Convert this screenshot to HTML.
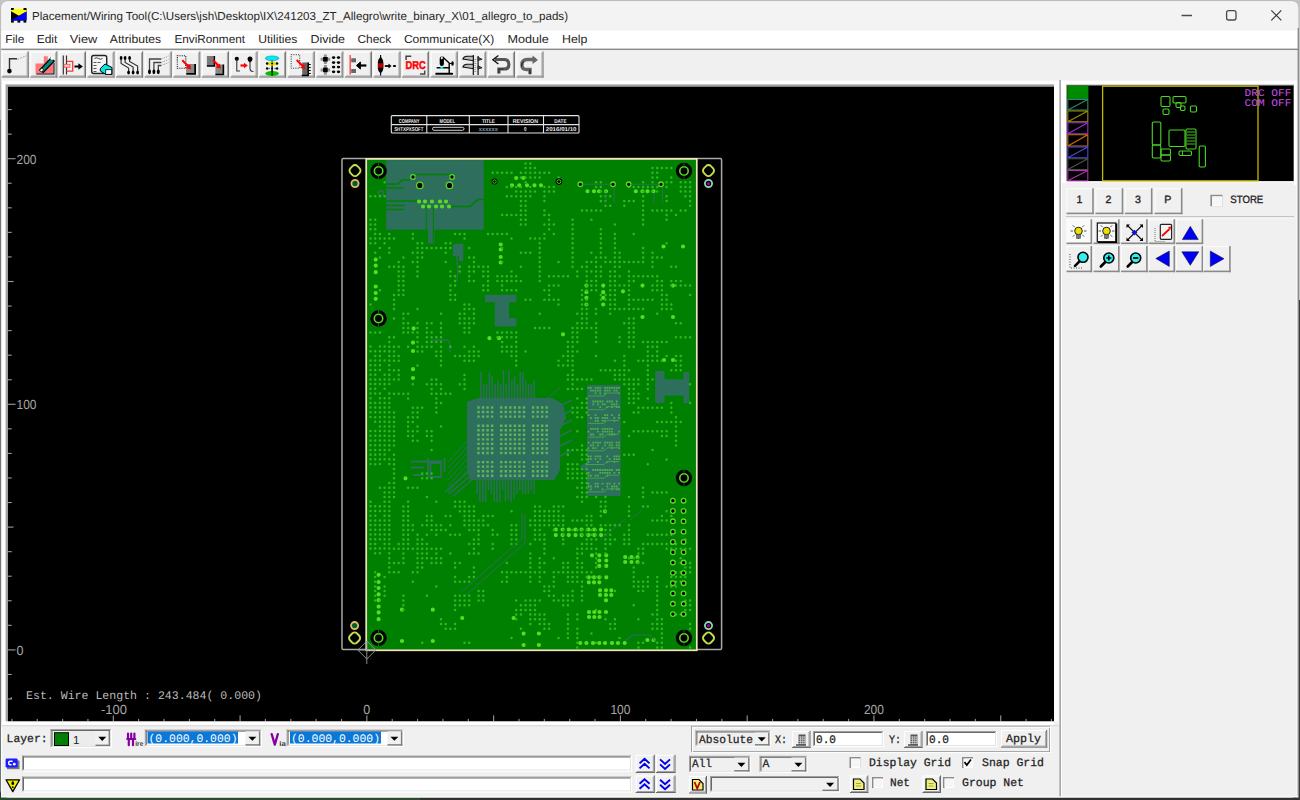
<!DOCTYPE html>
<html><head><meta charset="utf-8"><title>Placement/Wiring Tool</title><style>html,body{margin:0;padding:0;width:1300px;height:800px;overflow:hidden;background:#1f2520}svg{display:block}</style></head><body>
<svg width="1300" height="800" viewBox="0 0 1300 800" text-rendering="geometricPrecision">
<rect x="0" y="0" width="1300" height="800" fill="#c4c4c4" />
<rect x="0" y="120" width="1.5" height="680" fill="#2a3a2c" />
<rect x="0" y="797" width="1300" height="3" fill="#303230" />
<rect x="0" y="797" width="420" height="3" fill="#2d4a2e" />
<rect x="1298.5" y="300" width="1.5" height="500" fill="#3a3a3a" />
<rect x="0.5" y="0.5" width="1298" height="797" rx="7" ry="7" fill="#b4b4b4"/>
<rect x="1.2" y="1.2" width="1297" height="796" rx="6.5" ry="6.5" fill="#f0f0f0"/>
<path d="M1.2 30.5 V8 Q1.2 1.2 8 1.2 H1291.5 Q1298.2 1.2 1298.2 8 V30.5 Z" fill="#f3f3f3"/>
<rect x="11" y="9" width="15.5" height="11.5" fill="#000" />
<path d="M11 9 H26.5 V11.5 L19 15.8 L11 11.2 Z" fill="#ffff00" stroke="none" stroke-width="1" />
<path d="M11 20.6 L19 15.8 L26.5 11.5 V20.6 Z" fill="#0000ff" stroke="none" stroke-width="1" />
<path d="M11 8 h3 l-0.5 2 h-2.5z" fill="#000" stroke="none" stroke-width="1" />
<path d="M23.5 8 h3 v2 h-3z" fill="#000" stroke="none" stroke-width="1" />
<rect x="11" y="20.3" width="2.8" height="2.3" fill="#000" />
<rect x="17.5" y="20.3" width="2.8" height="2.3" fill="#000" />
<rect x="23.5" y="20.3" width="2.8" height="2.3" fill="#000" />
<text x="32" y="19.6" font-family="Liberation Sans" font-size="11.6" fill="#262626" text-anchor="start" textLength="536" lengthAdjust="spacingAndGlyphs">Placement/Wiring Tool(C:\Users\jsh\Desktop\IX\241203_ZT_Allegro\write_binary_X\01_allegro_to_pads)</text>
<line x1="1181.5" y1="15.5" x2="1192" y2="15.5" stroke="#4a4a4a" stroke-width="1.5" />
<rect x="1226.6" y="10.6" width="9.4" height="9.4" rx="2" fill="none" stroke="#4a4a4a" stroke-width="1.3"/>
<line x1="1271.3" y1="10.3" x2="1281.3" y2="20.3" stroke="#3a3a3a" stroke-width="1.2" />
<line x1="1281.3" y1="10.3" x2="1271.3" y2="20.3" stroke="#3a3a3a" stroke-width="1.2" />
<rect x="1.2" y="30.5" width="1297" height="18.3" fill="#ffffff" />
<rect x="1.2" y="48.6" width="1297" height="1.6" fill="#8a8a8a" />
<text x="5.2" y="42.6" font-family="Liberation Sans" font-size="11.6" fill="#262626" text-anchor="start" textLength="19.0" lengthAdjust="spacingAndGlyphs">File</text>
<text x="36.7" y="42.6" font-family="Liberation Sans" font-size="11.6" fill="#262626" text-anchor="start" textLength="20.6" lengthAdjust="spacingAndGlyphs">Edit</text>
<text x="69.8" y="42.6" font-family="Liberation Sans" font-size="11.6" fill="#262626" text-anchor="start" textLength="27.5" lengthAdjust="spacingAndGlyphs">View</text>
<text x="109.8" y="42.6" font-family="Liberation Sans" font-size="11.6" fill="#262626" text-anchor="start" textLength="51.4" lengthAdjust="spacingAndGlyphs">Attributes</text>
<text x="174.4" y="42.6" font-family="Liberation Sans" font-size="11.6" fill="#262626" text-anchor="start" textLength="70.6" lengthAdjust="spacingAndGlyphs">EnviRonment</text>
<text x="258.2" y="42.6" font-family="Liberation Sans" font-size="11.6" fill="#262626" text-anchor="start" textLength="39.1" lengthAdjust="spacingAndGlyphs">Utilities</text>
<text x="310.5" y="42.6" font-family="Liberation Sans" font-size="11.6" fill="#262626" text-anchor="start" textLength="34.5" lengthAdjust="spacingAndGlyphs">Divide</text>
<text x="357.5" y="42.6" font-family="Liberation Sans" font-size="11.6" fill="#262626" text-anchor="start" textLength="33.7" lengthAdjust="spacingAndGlyphs">Check</text>
<text x="403.9" y="42.6" font-family="Liberation Sans" font-size="11.6" fill="#262626" text-anchor="start" textLength="90.3" lengthAdjust="spacingAndGlyphs">Communicate(X)</text>
<text x="507.5" y="42.6" font-family="Liberation Sans" font-size="11.6" fill="#262626" text-anchor="start" textLength="41.4" lengthAdjust="spacingAndGlyphs">Module</text>
<text x="562" y="42.6" font-family="Liberation Sans" font-size="11.6" fill="#262626" text-anchor="start" textLength="25.4" lengthAdjust="spacingAndGlyphs">Help</text>
<rect x="1.2" y="50.2" width="1297" height="30.5" fill="#f0f0f0" />
<rect x="1.7" y="51.5" width="27" height="26" fill="#f0f0f0" />
<rect x="1.7" y="51.5" width="26" height="1" fill="#ffffff" />
<rect x="1.7" y="51.5" width="1" height="25" fill="#ffffff" />
<rect x="1.7" y="76.5" width="27" height="1" fill="#696969" />
<rect x="27.7" y="51.5" width="1" height="26" fill="#696969" />
<rect x="2.7" y="75.5" width="25" height="1" fill="#a0a0a0" />
<rect x="26.7" y="52.5" width="1" height="24" fill="#a0a0a0" />
<g transform="translate(1.7,51.5)"><path d="M7.8 18 V7.3 H15.3" fill="none" stroke="#333" stroke-width="1.4"/><path d="M15.5 8 L24.5 4.3" stroke="#aaa" stroke-width="1" stroke-dasharray="2 1"/><circle cx="7.7" cy="19.6" r="2.3" fill="#000"/></g>
<rect x="30.3" y="51.5" width="27" height="26" fill="#f0f0f0" />
<rect x="30.3" y="51.5" width="26" height="1" fill="#ffffff" />
<rect x="30.3" y="51.5" width="1" height="25" fill="#ffffff" />
<rect x="30.3" y="76.5" width="27" height="1" fill="#696969" />
<rect x="56.3" y="51.5" width="1" height="26" fill="#696969" />
<rect x="31.3" y="75.5" width="25" height="1" fill="#a0a0a0" />
<rect x="55.3" y="52.5" width="1" height="24" fill="#a0a0a0" />
<g transform="translate(30.3,51.5)"><path d="M5.2 12 H13.5 V4.7 H17.5 V12 H23.2 V22 H5.2 Z" fill="#f77" /><path d="M6 22 H23.2 V11 H24.2 V23 H6 Z" fill="#000"/><path d="M9.5 18.5 L20.5 6.5 L24 9.5 L13 21 Z" fill="#008a80" stroke="#000" stroke-width="1.2"/><path d="M9.2 18.8 L11.5 16.5 L13.5 18.5 L11 20.5 Z" fill="#fff" stroke="#000" stroke-width="0.8"/><circle cx="21.8" cy="6.8" r="1.6" fill="#fff"/></g>
<rect x="58.9" y="51.5" width="27" height="26" fill="#f0f0f0" />
<rect x="58.9" y="51.5" width="26" height="1" fill="#ffffff" />
<rect x="58.9" y="51.5" width="1" height="25" fill="#ffffff" />
<rect x="58.9" y="76.5" width="27" height="1" fill="#696969" />
<rect x="84.9" y="51.5" width="1" height="26" fill="#696969" />
<rect x="59.9" y="75.5" width="25" height="1" fill="#a0a0a0" />
<rect x="83.9" y="52.5" width="1" height="24" fill="#a0a0a0" />
<g transform="translate(58.9,51.5)"><path d="M4.4 4 V23 M7.6 4 V23" stroke="#333" stroke-width="1.2"/><path d="M7.6 9.8 H13.8 V19.6 H7.6" fill="none" stroke="#f33" stroke-width="1.3"/><rect x="5.2" y="12.8" width="5.8" height="3" fill="#fcc" stroke="#f55" stroke-width="0.8"/><path d="M15.5 15 H20" stroke="#000" stroke-width="2"/><path d="M19.5 11.8 L24 15 L19.5 18.2 Z" fill="#000"/></g>
<rect x="87.5" y="51.5" width="27" height="26" fill="#f0f0f0" />
<rect x="87.5" y="51.5" width="26" height="1" fill="#ffffff" />
<rect x="87.5" y="51.5" width="1" height="25" fill="#ffffff" />
<rect x="87.5" y="76.5" width="27" height="1" fill="#696969" />
<rect x="113.5" y="51.5" width="1" height="26" fill="#696969" />
<rect x="88.5" y="75.5" width="25" height="1" fill="#a0a0a0" />
<rect x="112.5" y="52.5" width="1" height="24" fill="#a0a0a0" />
<g transform="translate(87.5,51.5)"><rect x="4.2" y="4" width="15" height="18" rx="2" fill="#f4f4f4" stroke="#222" stroke-width="1.4"/><path d="M7 7 q2 -1.5 4 0 t4 0" fill="none" stroke="#333" stroke-width="0.9"/><path d="M6 11 h3 M6 14 h3 M6 17 h3 M6 20 h3 M10 11 h3" stroke="#444" stroke-width="0.9"/><path d="M12.8 17 L17.5 12.5 L24.5 16 L24.5 23 L18.5 23 L12.8 19.5 Z" fill="#00e8e8" stroke="#000" stroke-width="1"/><rect x="18.2" y="18.2" width="6" height="4.6" fill="#fff" stroke="#000" stroke-width="0.8"/></g>
<rect x="116.1" y="51.5" width="27" height="26" fill="#f0f0f0" />
<rect x="116.1" y="51.5" width="26" height="1" fill="#ffffff" />
<rect x="116.1" y="51.5" width="1" height="25" fill="#ffffff" />
<rect x="116.1" y="76.5" width="27" height="1" fill="#696969" />
<rect x="142.1" y="51.5" width="1" height="26" fill="#696969" />
<rect x="117.1" y="75.5" width="25" height="1" fill="#a0a0a0" />
<rect x="141.1" y="52.5" width="1" height="24" fill="#a0a0a0" />
<g transform="translate(116.1,51.5)"><path d="M5 8 V12 L12.5 16.5 V20 M9 8 V11 L17 15.5 V20 M13.5 8 V10 L21.5 14.5 V20" fill="none" stroke="#333" stroke-width="1.2"/><ellipse cx="5" cy="6.5" rx="1.4" ry="2" fill="#000"/><ellipse cx="9" cy="6.5" rx="1.4" ry="2" fill="#000"/><ellipse cx="13.5" cy="6.5" rx="1.4" ry="2" fill="#000"/><ellipse cx="12.5" cy="21" rx="1.4" ry="2" fill="#000"/><ellipse cx="17" cy="21" rx="1.4" ry="2" fill="#000"/><ellipse cx="21.5" cy="21" rx="1.4" ry="2" fill="#000"/></g>
<rect x="144.7" y="51.5" width="27" height="26" fill="#f0f0f0" />
<rect x="144.7" y="51.5" width="26" height="1" fill="#ffffff" />
<rect x="144.7" y="51.5" width="1" height="25" fill="#ffffff" />
<rect x="144.7" y="76.5" width="27" height="1" fill="#696969" />
<rect x="170.7" y="51.5" width="1" height="26" fill="#696969" />
<rect x="145.7" y="75.5" width="25" height="1" fill="#a0a0a0" />
<rect x="169.7" y="52.5" width="1" height="24" fill="#a0a0a0" />
<g transform="translate(144.7,51.5)"><path d="M4.8 19 V7.5 H16.5 M9.2 19 V11 H16.5 M13.6 19 V14 H16.5" fill="none" stroke="#444" stroke-width="1.3"/><path d="M16.5 7.5 L24 4.5 M16.5 11 L24 8 M16.5 14 L24 11" stroke="#999" stroke-width="0.9" stroke-dasharray="1.5 1"/><ellipse cx="4.8" cy="20.3" rx="1.5" ry="2.4" fill="#000"/><ellipse cx="9.2" cy="20.3" rx="1.5" ry="2.4" fill="#000"/><ellipse cx="13.6" cy="20.3" rx="1.5" ry="2.4" fill="#000"/></g>
<rect x="173.3" y="51.5" width="27" height="26" fill="#f0f0f0" />
<rect x="173.3" y="51.5" width="26" height="1" fill="#ffffff" />
<rect x="173.3" y="51.5" width="1" height="25" fill="#ffffff" />
<rect x="173.3" y="76.5" width="27" height="1" fill="#696969" />
<rect x="199.3" y="51.5" width="1" height="26" fill="#696969" />
<rect x="174.3" y="75.5" width="25" height="1" fill="#a0a0a0" />
<rect x="198.3" y="52.5" width="1" height="24" fill="#a0a0a0" />
<g transform="translate(173.3,51.5)"><rect x="4" y="4.3" width="8.5" height="12.5" fill="none" stroke="#222" stroke-width="1.1" stroke-dasharray="1.1 1.1"/><rect x="12.8" y="12.5" width="8.5" height="9.5" rx="1" fill="#8a8a8a" /><path d="M13 22.3 H21.8 V12.5" fill="none" stroke="#000" stroke-width="1.8"/><path d="M9 8.8 L15.5 15.3" stroke="#f00" stroke-width="2"/><path d="M12.5 16.8 L17.8 17.8 L16.8 12.5 Z" fill="#f00"/></g>
<rect x="201.9" y="51.5" width="27" height="26" fill="#f0f0f0" />
<rect x="201.9" y="51.5" width="26" height="1" fill="#ffffff" />
<rect x="201.9" y="51.5" width="1" height="25" fill="#ffffff" />
<rect x="201.9" y="76.5" width="27" height="1" fill="#696969" />
<rect x="227.9" y="51.5" width="1" height="26" fill="#696969" />
<rect x="202.9" y="75.5" width="25" height="1" fill="#a0a0a0" />
<rect x="226.9" y="52.5" width="1" height="24" fill="#a0a0a0" />
<g transform="translate(201.9,51.5)"><rect x="5" y="4.5" width="7.5" height="10" fill="#7a7a7a"/><path d="M5 14.5 H12.5 V4.5" fill="none" stroke="#000" stroke-width="1.4"/><rect x="13.5" y="13" width="8" height="10" fill="#888" /><path d="M13.5 23 H21.5 V13" fill="none" stroke="#000" stroke-width="1.6"/><path d="M11 8.5 L17 14.5" stroke="#f00" stroke-width="2"/><path d="M14 16 L19 17 L18 12 Z" fill="#f00"/></g>
<rect x="230.5" y="51.5" width="27" height="26" fill="#f0f0f0" />
<rect x="230.5" y="51.5" width="26" height="1" fill="#ffffff" />
<rect x="230.5" y="51.5" width="1" height="25" fill="#ffffff" />
<rect x="230.5" y="76.5" width="27" height="1" fill="#696969" />
<rect x="256.5" y="51.5" width="1" height="26" fill="#696969" />
<rect x="231.5" y="75.5" width="25" height="1" fill="#a0a0a0" />
<rect x="255.5" y="52.5" width="1" height="24" fill="#a0a0a0" />
<g transform="translate(230.5,51.5)"><circle cx="6.3" cy="7.3" r="2.1" fill="#000"/><path d="M6.3 8 V19.5 H9.5" fill="none" stroke="#333" stroke-width="1.1"/><path d="M19.5 5 q2.5 0 2.5 2.5 q0 2 -2.5 3.5 q-2.5 -1.5 -2.5 -3.5 q0 -2.5 2.5 -2.5z" fill="#000"/><path d="M19.5 10 V17 q0 3 3.5 3" fill="none" stroke="#333" stroke-width="1.1"/><path d="M10 14 H14" stroke="#f00" stroke-width="2.2"/><path d="M13.5 11.3 L17.3 14 L13.5 16.7 Z" fill="#f00"/></g>
<rect x="259.1" y="51.5" width="27" height="26" fill="#f0f0f0" />
<rect x="259.1" y="51.5" width="26" height="1" fill="#ffffff" />
<rect x="259.1" y="51.5" width="1" height="25" fill="#ffffff" />
<rect x="259.1" y="76.5" width="27" height="1" fill="#696969" />
<rect x="285.1" y="51.5" width="1" height="26" fill="#696969" />
<rect x="260.1" y="75.5" width="25" height="1" fill="#a0a0a0" />
<rect x="284.1" y="52.5" width="1" height="24" fill="#a0a0a0" />
<g transform="translate(259.1,51.5)"><path d="M13 7 V23" stroke="#000" stroke-width="1.3"/><ellipse cx="13" cy="6.8" rx="6.8" ry="2.4" fill="#00e8ff" stroke="#088" stroke-width="0.5"/><ellipse cx="13" cy="12" rx="5" ry="2" fill="#e8e000"/><circle cx="8" cy="12" r="1.2" fill="#000"/><circle cx="18" cy="12" r="1.2" fill="#000"/><circle cx="13" cy="12" r="1" fill="#000"/><circle cx="8" cy="17" r="1.2" fill="#000"/><circle cx="18" cy="17" r="1.2" fill="#000"/><circle cx="13" cy="17" r="1.1" fill="#000"/><circle cx="10" cy="17" r="0.8" fill="#444"/><circle cx="16" cy="17" r="0.8" fill="#444"/><ellipse cx="13" cy="22" rx="6.8" ry="2.4" fill="#00c000"/><path d="M13 19 V24" stroke="#000" stroke-width="1.3"/></g>
<rect x="287.7" y="51.5" width="27" height="26" fill="#f0f0f0" />
<rect x="287.7" y="51.5" width="26" height="1" fill="#ffffff" />
<rect x="287.7" y="51.5" width="1" height="25" fill="#ffffff" />
<rect x="287.7" y="76.5" width="27" height="1" fill="#696969" />
<rect x="313.7" y="51.5" width="1" height="26" fill="#696969" />
<rect x="288.7" y="75.5" width="25" height="1" fill="#a0a0a0" />
<rect x="312.7" y="52.5" width="1" height="24" fill="#a0a0a0" />
<g transform="translate(287.7,51.5)"><rect x="3.5" y="3.2" width="8.5" height="13.5" fill="none" stroke="#333" stroke-width="1" stroke-dasharray="1 1.3"/><rect x="14.5" y="11" width="6" height="13" fill="#666"/><path d="M20.5 11 V24 H14" fill="none" stroke="#000" stroke-width="1.5"/><path d="M20.5 13 h2.5 M20.5 16 h2.5 M20.5 19 h2.5 M20.5 22 h2.5" stroke="#000" stroke-width="1"/><path d="M9 8.5 L15.5 15" stroke="#f00" stroke-width="2"/><path d="M12.5 16.5 L17.5 17.5 L16.5 12.5 Z" fill="#f00"/></g>
<rect x="316.3" y="51.5" width="27" height="26" fill="#f0f0f0" />
<rect x="316.3" y="51.5" width="26" height="1" fill="#ffffff" />
<rect x="316.3" y="51.5" width="1" height="25" fill="#ffffff" />
<rect x="316.3" y="76.5" width="27" height="1" fill="#696969" />
<rect x="342.3" y="51.5" width="1" height="26" fill="#696969" />
<rect x="317.3" y="75.5" width="25" height="1" fill="#a0a0a0" />
<rect x="341.3" y="52.5" width="1" height="24" fill="#a0a0a0" />
<g transform="translate(316.3,51.5)"><path d="M4.3 7.8 H13.9 M9.1 3 V12.6 M4.3 18.4 H13.9 M9.1 13.6 V23.2" stroke="#777" stroke-width="3" opacity="0.75"/><rect x="6.8" y="5.5" width="4.6" height="4.6" fill="#000"/><rect x="6.8" y="16.1" width="4.6" height="4.6" fill="#000"/><ellipse cx="17.3" cy="6.05" rx="1.7" ry="1.35" fill="#000"/><ellipse cx="17.3" cy="11.1" rx="1.7" ry="1.35" fill="#000"/><ellipse cx="17.3" cy="15.6" rx="1.7" ry="1.35" fill="#000"/><ellipse cx="17.3" cy="20.3" rx="1.7" ry="1.35" fill="#000"/><ellipse cx="22.2" cy="6.05" rx="1.7" ry="1.35" fill="#000"/><ellipse cx="22.2" cy="11.1" rx="1.7" ry="1.35" fill="#000"/><ellipse cx="22.2" cy="15.6" rx="1.7" ry="1.35" fill="#000"/><ellipse cx="22.2" cy="20.3" rx="1.7" ry="1.35" fill="#000"/></g>
<rect x="344.9" y="51.5" width="27" height="26" fill="#f0f0f0" />
<rect x="344.9" y="51.5" width="26" height="1" fill="#ffffff" />
<rect x="344.9" y="51.5" width="1" height="25" fill="#ffffff" />
<rect x="344.9" y="76.5" width="27" height="1" fill="#696969" />
<rect x="370.9" y="51.5" width="1" height="26" fill="#696969" />
<rect x="345.9" y="75.5" width="25" height="1" fill="#a0a0a0" />
<rect x="369.9" y="52.5" width="1" height="24" fill="#a0a0a0" />
<g transform="translate(344.9,51.5)"><path d="M5.3 3.5 V23" stroke="#f44" stroke-width="1.4"/><rect x="6.3" y="6.8" width="4.8" height="4" fill="#666"/><rect x="6.3" y="17.5" width="4.8" height="4" fill="#666"/><path d="M13.5 14 H21.5" stroke="#000" stroke-width="2.2"/><path d="M15.5 10.5 L11.5 14 L15.5 17.5 Z" fill="#000" stroke="#000" stroke-width="1"/></g>
<rect x="373.5" y="51.5" width="27" height="26" fill="#f0f0f0" />
<rect x="373.5" y="51.5" width="26" height="1" fill="#ffffff" />
<rect x="373.5" y="51.5" width="1" height="25" fill="#ffffff" />
<rect x="373.5" y="76.5" width="27" height="1" fill="#696969" />
<rect x="399.5" y="51.5" width="1" height="26" fill="#696969" />
<rect x="374.5" y="75.5" width="25" height="1" fill="#a0a0a0" />
<rect x="398.5" y="52.5" width="1" height="24" fill="#a0a0a0" />
<g transform="translate(373.5,51.5)"><path d="M7.1 3.5 V24" stroke="#000" stroke-width="1.1"/><path d="M7.1 5 Q9.8 8 9.8 11 V17 Q9.8 20 7.1 22 Q4.4 20 4.4 17 V11 Q4.4 8 7.1 5 Z" fill="#000"/><rect x="4.4" y="11.7" width="5.4" height="4.6" fill="#b00000"/><path d="M11.3 14.5 H15.5" stroke="#000" stroke-width="1.8"/><path d="M15 12 L18 14.5 L15 17 Z" fill="#000"/><rect x="19.6" y="13.4" width="2.8" height="2.2" rx="0.6" fill="#000"/></g>
<rect x="402.1" y="51.5" width="27" height="26" fill="#f0f0f0" />
<rect x="402.1" y="51.5" width="26" height="1" fill="#ffffff" />
<rect x="402.1" y="51.5" width="1" height="25" fill="#ffffff" />
<rect x="402.1" y="76.5" width="27" height="1" fill="#696969" />
<rect x="428.1" y="51.5" width="1" height="26" fill="#696969" />
<rect x="403.1" y="75.5" width="25" height="1" fill="#a0a0a0" />
<rect x="427.1" y="52.5" width="1" height="24" fill="#a0a0a0" />
<g transform="translate(402.1,51.5)"><path d="M4 8.5 V4.8 H9.2" fill="none" stroke="#444" stroke-width="1.5"/><path d="M22.6 19 V22.4 H17.8" fill="none" stroke="#444" stroke-width="1.5"/><text x="3.4" y="17.4" font-family="Liberation Sans" font-weight="bold" font-size="11.4" fill="#f00" stroke="#f00" stroke-width="0.45" textLength="20.2" lengthAdjust="spacingAndGlyphs">DRC</text></g>
<rect x="430.7" y="51.5" width="27" height="26" fill="#f0f0f0" />
<rect x="430.7" y="51.5" width="26" height="1" fill="#ffffff" />
<rect x="430.7" y="51.5" width="1" height="25" fill="#ffffff" />
<rect x="430.7" y="76.5" width="27" height="1" fill="#696969" />
<rect x="456.7" y="51.5" width="1" height="26" fill="#696969" />
<rect x="431.7" y="75.5" width="25" height="1" fill="#a0a0a0" />
<rect x="455.7" y="52.5" width="1" height="24" fill="#a0a0a0" />
<g transform="translate(430.7,51.5)"><path d="M5.5 22.2 H21.5" stroke="#000" stroke-width="2" stroke-linecap="round"/><path d="M6.5 16.3 H18" stroke="#000" stroke-width="1.5" stroke-linecap="round"/><rect x="9.6" y="15.2" width="3" height="2.2" fill="#0ee"/><path d="M12 5.5 L18.5 11.5 V22" fill="none" stroke="#000" stroke-width="1.4"/><rect x="9" y="5" width="4.2" height="9.5" rx="2" fill="#000"/><circle cx="11.1" cy="6.6" r="1.1" fill="#fff"/><ellipse cx="21.8" cy="12" rx="1.3" ry="2.3" fill="#000"/><path d="M18.5 12 H21" stroke="#000" stroke-width="1"/></g>
<rect x="459.3" y="51.5" width="27" height="26" fill="#f0f0f0" />
<rect x="459.3" y="51.5" width="26" height="1" fill="#ffffff" />
<rect x="459.3" y="51.5" width="1" height="25" fill="#ffffff" />
<rect x="459.3" y="76.5" width="27" height="1" fill="#696969" />
<rect x="485.3" y="51.5" width="1" height="26" fill="#696969" />
<rect x="460.3" y="75.5" width="25" height="1" fill="#a0a0a0" />
<rect x="484.3" y="52.5" width="1" height="24" fill="#a0a0a0" />
<g transform="translate(459.3,51.5)"><rect x="14" y="3.8" width="4.8" height="19.6" fill="#e8e8e8"/><path d="M14 3.5 V23.5 M18.8 4.5 V23.5" stroke="#111" stroke-width="1.2"/><path d="M15 8 h2 M15 10 h1.5 M15 12 h2 M15 14 h1.5 M15 16 h2 M15 18 h1.5 M15 20 h2" stroke="#777" stroke-width="0.7"/><path d="M14 4.8 H7.5 Q4.2 5.2 3.6 7.6 L14 9.2 Z" fill="#bbb" stroke="#111" stroke-width="1.1"/><path d="M14 12.8 H7.5 Q4.2 13.2 3.6 15.6 L14 17.2 Z" fill="#bbb" stroke="#111" stroke-width="1.1"/><path d="M18.8 5.8 L22.8 7.8 L18.8 9 Z M18.8 14.3 L22.8 16.3 L18.8 17.5 Z" fill="#555" stroke="#111" stroke-width="0.8"/></g>
<rect x="487.9" y="51.5" width="27" height="26" fill="#f0f0f0" />
<rect x="487.9" y="51.5" width="26" height="1" fill="#ffffff" />
<rect x="487.9" y="51.5" width="1" height="25" fill="#ffffff" />
<rect x="487.9" y="76.5" width="27" height="1" fill="#696969" />
<rect x="513.9" y="51.5" width="1" height="26" fill="#696969" />
<rect x="488.9" y="75.5" width="25" height="1" fill="#a0a0a0" />
<rect x="512.9" y="52.5" width="1" height="24" fill="#a0a0a0" />
<g transform="translate(487.9,51.5)"><path d="M7 8 H16 Q21 8 21 13 Q21 17.5 16 17.5 H11 V22" fill="none" stroke="#555" stroke-width="3.2"/><path d="M10.5 4 L5 8.2 L10.5 12.5" fill="none" stroke="#111" stroke-width="1.4"/><path d="M11 22 V17.5 H16" fill="none" stroke="#222" stroke-width="0.8"/></g>
<rect x="516.5" y="51.5" width="27" height="26" fill="#f0f0f0" />
<rect x="516.5" y="51.5" width="26" height="1" fill="#ffffff" />
<rect x="516.5" y="51.5" width="1" height="25" fill="#ffffff" />
<rect x="516.5" y="76.5" width="27" height="1" fill="#696969" />
<rect x="542.5" y="51.5" width="1" height="26" fill="#696969" />
<rect x="517.5" y="75.5" width="25" height="1" fill="#a0a0a0" />
<rect x="541.5" y="52.5" width="1" height="24" fill="#a0a0a0" />
<g transform="translate(516.5,51.5)"><path d="M19 8 H11 Q5.5 8 5.5 13 V14 Q5.5 18 10 18 H13.5 V22.5" fill="none" stroke="#666" stroke-width="3.4"/><path d="M16 4 L21.5 8.5 L16 12.5 Z" fill="#666"/><path d="M7 10 Q5 12 5 15" fill="none" stroke="#111" stroke-width="0.9"/><path d="M13.5 18 V23" stroke="#111" stroke-width="1"/></g>
<rect x="2" y="80.7" width="1056.5" height="646.3" fill="#ffffff" />
<rect x="5.6" y="84.4" width="1048.4" height="637.2" fill="#a0a0a0" />
<rect x="8" y="86.8" width="1046" height="634.8" fill="#000000" />
<rect x="1058.6" y="80.7" width="7.4" height="104.3" fill="#ffffff" />
<rect x="1058.6" y="80.7" width="0.9" height="716.5" fill="#ffffff" />
<rect x="1059.3" y="80" width="1.7" height="717.2" fill="#a9a9a9" />
<rect x="8" y="698.47" width="3.7" height="1.1" fill="#9a9a9a" />
<rect x="8" y="673.91" width="3.7" height="1.1" fill="#9a9a9a" />
<rect x="8" y="649.35" width="7.5" height="1.1" fill="#9a9a9a" />
<rect x="8" y="624.79" width="3.7" height="1.1" fill="#9a9a9a" />
<rect x="8" y="600.23" width="3.7" height="1.1" fill="#9a9a9a" />
<rect x="8" y="575.67" width="3.7" height="1.1" fill="#9a9a9a" />
<rect x="8" y="551.11" width="3.7" height="1.1" fill="#9a9a9a" />
<rect x="8" y="526.55" width="5.5" height="1.1" fill="#9a9a9a" />
<rect x="8" y="501.99" width="3.7" height="1.1" fill="#9a9a9a" />
<rect x="8" y="477.43" width="3.7" height="1.1" fill="#9a9a9a" />
<rect x="8" y="452.87" width="3.7" height="1.1" fill="#9a9a9a" />
<rect x="8" y="428.31" width="3.7" height="1.1" fill="#9a9a9a" />
<rect x="8" y="403.75" width="7.5" height="1.1" fill="#9a9a9a" />
<rect x="8" y="379.19" width="3.7" height="1.1" fill="#9a9a9a" />
<rect x="8" y="354.63" width="3.7" height="1.1" fill="#9a9a9a" />
<rect x="8" y="330.07" width="3.7" height="1.1" fill="#9a9a9a" />
<rect x="8" y="305.51" width="3.7" height="1.1" fill="#9a9a9a" />
<rect x="8" y="280.95" width="5.5" height="1.1" fill="#9a9a9a" />
<rect x="8" y="256.39" width="3.7" height="1.1" fill="#9a9a9a" />
<rect x="8" y="231.83" width="3.7" height="1.1" fill="#9a9a9a" />
<rect x="8" y="207.27" width="3.7" height="1.1" fill="#9a9a9a" />
<rect x="8" y="182.71" width="3.7" height="1.1" fill="#9a9a9a" />
<rect x="8" y="158.15" width="7.5" height="1.1" fill="#9a9a9a" />
<rect x="8" y="133.59" width="3.7" height="1.1" fill="#9a9a9a" />
<rect x="8" y="109.03" width="3.7" height="1.1" fill="#9a9a9a" />
<text x="16.5" y="163.7" font-family="Liberation Sans" font-size="13.2" fill="#a6a6a6" text-anchor="start" textLength="20" lengthAdjust="spacingAndGlyphs">200</text>
<text x="16.5" y="409.3" font-family="Liberation Sans" font-size="13.2" fill="#a6a6a6" text-anchor="start" textLength="20" lengthAdjust="spacingAndGlyphs">100</text>
<text x="16.5" y="654.9" font-family="Liberation Sans" font-size="13.2" fill="#a6a6a6" text-anchor="start" textLength="7" lengthAdjust="spacingAndGlyphs">0</text>
<rect x="11.33" y="718.9" width="1.1" height="2.5" fill="#9a9a9a" />
<rect x="36.69" y="718.9" width="1.1" height="2.5" fill="#9a9a9a" />
<rect x="62.04" y="718.9" width="1.1" height="2.5" fill="#9a9a9a" />
<rect x="87.4" y="718.9" width="1.1" height="2.5" fill="#9a9a9a" />
<rect x="112.75" y="715.4" width="1.1" height="6" fill="#9a9a9a" />
<rect x="138.11" y="718.9" width="1.1" height="2.5" fill="#9a9a9a" />
<rect x="163.46" y="718.9" width="1.1" height="2.5" fill="#9a9a9a" />
<rect x="188.82" y="718.9" width="1.1" height="2.5" fill="#9a9a9a" />
<rect x="214.17" y="718.9" width="1.1" height="2.5" fill="#9a9a9a" />
<rect x="239.53" y="715.4" width="1.1" height="6" fill="#9a9a9a" />
<rect x="264.88" y="718.9" width="1.1" height="2.5" fill="#9a9a9a" />
<rect x="290.24" y="718.9" width="1.1" height="2.5" fill="#9a9a9a" />
<rect x="315.59" y="718.9" width="1.1" height="2.5" fill="#9a9a9a" />
<rect x="340.94" y="718.9" width="1.1" height="2.5" fill="#9a9a9a" />
<rect x="366.3" y="715.4" width="1.1" height="6" fill="#9a9a9a" />
<rect x="391.66" y="718.9" width="1.1" height="2.5" fill="#9a9a9a" />
<rect x="417.01" y="718.9" width="1.1" height="2.5" fill="#9a9a9a" />
<rect x="442.37" y="718.9" width="1.1" height="2.5" fill="#9a9a9a" />
<rect x="467.72" y="718.9" width="1.1" height="2.5" fill="#9a9a9a" />
<rect x="493.07" y="715.4" width="1.1" height="6" fill="#9a9a9a" />
<rect x="518.43" y="718.9" width="1.1" height="2.5" fill="#9a9a9a" />
<rect x="543.79" y="718.9" width="1.1" height="2.5" fill="#9a9a9a" />
<rect x="569.14" y="718.9" width="1.1" height="2.5" fill="#9a9a9a" />
<rect x="594.5" y="718.9" width="1.1" height="2.5" fill="#9a9a9a" />
<rect x="619.85" y="715.4" width="1.1" height="6" fill="#9a9a9a" />
<rect x="645.21" y="718.9" width="1.1" height="2.5" fill="#9a9a9a" />
<rect x="670.56" y="718.9" width="1.1" height="2.5" fill="#9a9a9a" />
<rect x="695.92" y="718.9" width="1.1" height="2.5" fill="#9a9a9a" />
<rect x="721.27" y="718.9" width="1.1" height="2.5" fill="#9a9a9a" />
<rect x="746.62" y="715.4" width="1.1" height="6" fill="#9a9a9a" />
<rect x="771.98" y="718.9" width="1.1" height="2.5" fill="#9a9a9a" />
<rect x="797.34" y="718.9" width="1.1" height="2.5" fill="#9a9a9a" />
<rect x="822.69" y="718.9" width="1.1" height="2.5" fill="#9a9a9a" />
<rect x="848.05" y="718.9" width="1.1" height="2.5" fill="#9a9a9a" />
<rect x="873.4" y="715.4" width="1.1" height="6" fill="#9a9a9a" />
<rect x="898.75" y="718.9" width="1.1" height="2.5" fill="#9a9a9a" />
<rect x="924.11" y="718.9" width="1.1" height="2.5" fill="#9a9a9a" />
<rect x="949.47" y="718.9" width="1.1" height="2.5" fill="#9a9a9a" />
<rect x="974.82" y="718.9" width="1.1" height="2.5" fill="#9a9a9a" />
<rect x="1000.18" y="715.4" width="1.1" height="6" fill="#9a9a9a" />
<rect x="1025.53" y="718.9" width="1.1" height="2.5" fill="#9a9a9a" />
<rect x="1050.88" y="718.9" width="1.1" height="2.5" fill="#9a9a9a" />
<text x="101" y="714.2" font-family="Liberation Sans" font-size="13.2" fill="#a6a6a6" text-anchor="start" textLength="26" lengthAdjust="spacingAndGlyphs">-100</text>
<text x="363.35" y="714.2" font-family="Liberation Sans" font-size="13.2" fill="#a6a6a6" text-anchor="start" textLength="7" lengthAdjust="spacingAndGlyphs">0</text>
<text x="610.4" y="714.2" font-family="Liberation Sans" font-size="13.2" fill="#a6a6a6" text-anchor="start" textLength="20" lengthAdjust="spacingAndGlyphs">100</text>
<text x="863.95" y="714.2" font-family="Liberation Sans" font-size="13.2" fill="#a6a6a6" text-anchor="start" textLength="20" lengthAdjust="spacingAndGlyphs">200</text>
<text x="26" y="699.2" font-family="Liberation Mono" font-size="11.6" fill="#bababa" text-anchor="start" textLength="236" lengthAdjust="spacingAndGlyphs">Est. Wire Length : 243.484( 0.000)</text>
<rect x="10.5" y="697.5" width="1.5" height="1.5" fill="#aaa" />
<g fill="none" stroke="#e4e4e4" stroke-width="1.1">
<rect x="391.3" y="115.6" width="187.7" height="17.4" rx="1"/>
<path d="M391.3 124.6 H579 M426.8 115.6 V133 M469.3 115.6 V133 M508 115.6 V133 M543.5 115.6 V133"/>
<rect x="432.5" y="127.3" width="31.5" height="3" rx="1.5" stroke-width="0.9"/>
</g>
<text x="398.8" y="122.6" font-family="Liberation Sans" font-size="5.6" fill="#ededed" text-anchor="start" font-weight="bold" textLength="20.8" lengthAdjust="spacingAndGlyphs">COMPANY</text>
<text x="439.6" y="122.6" font-family="Liberation Sans" font-size="5.6" fill="#ededed" text-anchor="start" font-weight="bold" textLength="15.4" lengthAdjust="spacingAndGlyphs">MODEL</text>
<text x="481.9" y="122.6" font-family="Liberation Sans" font-size="5.6" fill="#ededed" text-anchor="start" font-weight="bold" textLength="13.1" lengthAdjust="spacingAndGlyphs">TITLE</text>
<text x="512.7" y="122.6" font-family="Liberation Sans" font-size="5.6" fill="#ededed" text-anchor="start" font-weight="bold" textLength="25.3" lengthAdjust="spacingAndGlyphs">REVISION</text>
<text x="554.2" y="122.6" font-family="Liberation Sans" font-size="5.6" fill="#ededed" text-anchor="start" font-weight="bold" textLength="12.3" lengthAdjust="spacingAndGlyphs">DATE</text>
<text x="394.2" y="131.2" font-family="Liberation Sans" font-size="5.6" fill="#ededed" text-anchor="start" font-weight="bold" textLength="29.3" lengthAdjust="spacingAndGlyphs">SHTXPXSOFT</text>
<text x="524" y="131.2" font-family="Liberation Sans" font-size="5.6" fill="#ededed" text-anchor="start" font-weight="bold" textLength="2.5" lengthAdjust="spacingAndGlyphs">0</text>
<text x="545.8" y="131.2" font-family="Liberation Sans" font-size="5.6" fill="#ededed" text-anchor="start" font-weight="bold" textLength="30.7" lengthAdjust="spacingAndGlyphs">2016/01/10</text>
<text x="478.8" y="131.2" font-family="Liberation Sans" font-size="5.6" fill="#7a9aa8" text-anchor="start" font-weight="bold" textLength="19" lengthAdjust="spacingAndGlyphs">xxxxxx</text>
<rect x="342" y="158.5" width="379.6" height="491" rx="1.2" fill="none" stroke="#a8a8a8" stroke-width="1.5"/>
<rect x="366.2" y="158.9" width="330.59999999999997" height="491.4" fill="#008000" stroke="#f6e2bd" stroke-width="1.7"/>
<rect x="386.2" y="160.2" width="97.6" height="69.5" fill="#2e6e5c" />
<rect x="428" y="229" width="6.5" height="14.5" fill="#2e6e5c" />
<path d="M485 294.7 L516.4 294.7 L516.4 302.2 L509 302.2 L509 318 L516.4 318 L516.4 326.6 L494.7 326.6 L494.7 302.2 L485 302.2 Z" fill="#2e6e5c"/>
<path d="M655.2 371 L664.5 371 L664.5 379.3 L683.5 379.3 L683.5 372 L689.2 372 L689.2 403 L683.5 403 L683.5 395.5 L664.5 395.5 L664.5 403 L655.2 403 Z" fill="#2e6e5c"/>
<rect x="587" y="385" width="33.7" height="111" fill="#2e6e5c" />
<path d="M452.8 245.5 L455 243.8 L463.3 243.8 L463.3 261 L459 261 L459 256 L452.8 256 Z" fill="#2e6e5c"/>
<path d="M456.5 256 L458 270 L457 281 M430 340 H447 Q450 341 450 344 V352" stroke="#2e6e5c" stroke-width="1.3" fill="none"/>
<g stroke="#008000" stroke-width="1.7" fill="none">
<path d="M414.7 174.5 H453.7 M386 184 H398 L402 180 H410 M386 188 H404 M386 201 H419 M386 205.5 H405 M386 209.5 H404 M449 206.5 H470 L478 199.5 H484"/>
</g>
<path d="M426.4 207 V243 M433.4 207 V243" stroke="#008000" stroke-width="1.1"/>
<circle cx="381" cy="193" r="2.6" fill="none" stroke="#2e6e5c" stroke-width="1.3"/>
<path d="M467 402 L478 398 L552 398 L563 404 L566 418 L560 430 L560 470 L554 480 L470 480 L467 470 Z" fill="#2e6e5c"/>
<g stroke="#2e6e5c" stroke-width="1.5" fill="none">
<path d="M481 372 V399"/>
<path d="M483.8 384 V399"/>
<path d="M486.6 384 V399"/>
<path d="M489.4 372 V399"/>
<path d="M492.2 376 V399"/>
<path d="M495 384 V399"/>
<path d="M497.8 380 V399"/>
<path d="M500.6 384 V399"/>
<path d="M503.4 370 V399"/>
<path d="M506.2 384 V399"/>
<path d="M509 370 V399"/>
<path d="M511.8 380 V399"/>
<path d="M514.6 376 V399"/>
<path d="M517.4 384 V399"/>
<path d="M520.2 372 V399"/>
<path d="M523 372 V399"/>
<path d="M525.8 380 V399"/>
<path d="M528.6 384 V399"/>
<path d="M531.4 384 V399"/>
<path d="M534.2 380 V399"/>
<path d="M477 479 V494"/>
<path d="M479.85 479 V502"/>
<path d="M482.7 479 V502"/>
<path d="M485.55 479 V502"/>
<path d="M488.4 479 V490"/>
<path d="M491.25 479 V494"/>
<path d="M494.1 479 V502"/>
<path d="M496.95 479 V502"/>
<path d="M499.8 479 V502"/>
<path d="M502.65 479 V490"/>
<path d="M505.5 479 V502"/>
<path d="M508.35 479 V499"/>
<path d="M511.2 479 V502"/>
<path d="M514.05 479 V499"/>
<path d="M516.9 479 V494"/>
<path d="M519.75 479 V490"/>
<path d="M522.6 479 V494"/>
<path d="M525.45 479 V494"/>
<path d="M528.3 479 V494"/>
<path d="M531.15 479 V490"/>
<path d="M534 479 V494"/>
<path d="M468 440 L448 462" stroke-width="1"/>
<path d="M468 446 L448 468" stroke-width="1"/>
<path d="M468 452 L448 474" stroke-width="1"/>
<path d="M468 458 L448 480" stroke-width="1"/>
<path d="M468 464 L448 486" stroke-width="1"/>
<path d="M468 470 L448 492" stroke-width="1"/>
<path d="M560 406 L572 400"/>
<path d="M560 416 L572 410"/>
<path d="M560 426 L572 420"/>
<path d="M560 436 L572 430"/>
<path d="M560 446 L572 440"/>
<path d="M560 456 L572 450"/>
<path d="M445 492 L468 472 M449 494 L470 476 M453 496 L472 480"/>
</g>
<path d="M411 461.5 H442 M411 467.5 H424 M428 458 V479 M430.5 463 H441 V477 H430.5 Z M444.5 458 V472 M413 475 H424" stroke="#2e6e5c" stroke-width="1.8" fill="none"/>
<path d="M478.5 407.5h0M478.5 412.05h0M478.5 416.6h0M478.5 425.7h0M478.5 430.25h0M478.5 434.8h0M478.5 439.35h0M478.5 443.9h0M478.5 448.45h0M478.5 453h0M478.5 462.1h0M478.5 466.65h0M478.5 471.2h0M478.5 475.75h0M483.05 407.5h0M483.05 412.05h0M483.05 416.6h0M483.05 425.7h0M483.05 430.25h0M483.05 434.8h0M483.05 439.35h0M483.05 443.9h0M483.05 448.45h0M483.05 453h0M483.05 462.1h0M483.05 466.65h0M483.05 471.2h0M483.05 475.75h0M487.6 407.5h0M487.6 412.05h0M487.6 416.6h0M487.6 425.7h0M487.6 430.25h0M487.6 434.8h0M487.6 439.35h0M487.6 443.9h0M487.6 448.45h0M487.6 453h0M487.6 462.1h0M487.6 466.65h0M487.6 471.2h0M487.6 475.75h0M492.15 407.5h0M492.15 412.05h0M492.15 416.6h0M492.15 425.7h0M492.15 430.25h0M492.15 434.8h0M492.15 439.35h0M492.15 443.9h0M492.15 448.45h0M492.15 453h0M492.15 462.1h0M492.15 466.65h0M492.15 471.2h0M492.15 475.75h0M501.25 407.5h0M501.25 412.05h0M501.25 416.6h0M501.25 425.7h0M501.25 430.25h0M501.25 434.8h0M501.25 439.35h0M501.25 443.9h0M501.25 448.45h0M501.25 453h0M501.25 462.1h0M501.25 466.65h0M501.25 471.2h0M501.25 475.75h0M505.8 407.5h0M505.8 412.05h0M505.8 416.6h0M505.8 425.7h0M505.8 430.25h0M505.8 434.8h0M505.8 439.35h0M505.8 443.9h0M505.8 448.45h0M505.8 453h0M505.8 462.1h0M505.8 466.65h0M505.8 471.2h0M505.8 475.75h0M510.35 407.5h0M510.35 412.05h0M510.35 416.6h0M510.35 425.7h0M510.35 430.25h0M510.35 434.8h0M510.35 439.35h0M510.35 443.9h0M510.35 448.45h0M510.35 453h0M510.35 462.1h0M510.35 466.65h0M510.35 471.2h0M510.35 475.75h0M514.9 407.5h0M514.9 412.05h0M514.9 416.6h0M514.9 425.7h0M514.9 430.25h0M514.9 434.8h0M514.9 439.35h0M514.9 443.9h0M514.9 448.45h0M514.9 453h0M514.9 462.1h0M514.9 466.65h0M514.9 471.2h0M514.9 475.75h0M519.45 407.5h0M519.45 412.05h0M519.45 416.6h0M519.45 425.7h0M519.45 430.25h0M519.45 434.8h0M519.45 439.35h0M519.45 443.9h0M519.45 448.45h0M519.45 453h0M519.45 462.1h0M519.45 466.65h0M519.45 471.2h0M519.45 475.75h0M524 407.5h0M524 412.05h0M524 416.6h0M524 425.7h0M524 430.25h0M524 434.8h0M524 439.35h0M524 443.9h0M524 448.45h0M524 453h0M524 462.1h0M524 466.65h0M524 471.2h0M524 475.75h0M533.1 407.5h0M533.1 412.05h0M533.1 416.6h0M533.1 425.7h0M533.1 430.25h0M533.1 434.8h0M533.1 439.35h0M533.1 443.9h0M533.1 448.45h0M533.1 453h0M533.1 462.1h0M533.1 466.65h0M533.1 471.2h0M533.1 475.75h0M537.65 407.5h0M537.65 412.05h0M537.65 416.6h0M537.65 425.7h0M537.65 430.25h0M537.65 434.8h0M537.65 439.35h0M537.65 443.9h0M537.65 448.45h0M537.65 453h0M537.65 462.1h0M537.65 466.65h0M537.65 471.2h0M537.65 475.75h0M542.2 407.5h0M542.2 412.05h0M542.2 416.6h0M542.2 425.7h0M542.2 430.25h0M542.2 434.8h0M542.2 439.35h0M542.2 443.9h0M542.2 448.45h0M542.2 453h0M542.2 462.1h0M542.2 466.65h0M542.2 471.2h0M542.2 475.75h0M546.75 407.5h0M546.75 412.05h0M546.75 416.6h0M546.75 425.7h0M546.75 430.25h0M546.75 434.8h0M546.75 439.35h0M546.75 443.9h0M546.75 448.45h0M546.75 453h0M546.75 462.1h0M546.75 466.65h0M546.75 471.2h0M546.75 475.75h0" stroke="#5cb858" stroke-width="2.4" stroke-linecap="square"/>

<path d="M588.5 387.8h0M590.85 387.8h0M590.85 390.6h0M593.2 390.6h0M595.55 387.8h0M595.55 390.6h0M595.55 393.4h0M597.9 387.8h0M597.9 390.6h0M600.25 387.8h0M600.25 390.6h0M600.25 393.4h0M604.95 387.8h0M604.95 390.6h0M604.95 393.4h0M607.3 387.8h0M607.3 390.6h0M609.65 387.8h0M609.65 390.6h0M612 387.8h0M614.35 387.8h0M614.35 390.6h0M616.7 387.8h0M616.7 390.6h0M619.05 387.8h0M619.05 393.4h0M593.2 401.5h0M593.2 404.3h0M595.55 401.5h0M597.9 401.5h0M597.9 404.3h0M600.25 401.5h0M600.25 407.1h0M602.6 401.5h0M602.6 404.3h0M604.95 404.3h0M607.3 401.5h0M607.3 407.1h0M609.65 401.5h0M612 401.5h0M612 404.3h0M612 407.1h0M614.35 404.3h0M616.7 401.5h0M616.7 404.3h0M616.7 407.1h0M619.05 407.1h0M588.5 415.2h0M590.85 418h0M595.55 415.2h0M595.55 418h0M595.55 420.8h0M597.9 418h0M597.9 420.8h0M602.6 418h0M602.6 420.8h0M604.95 415.2h0M604.95 418h0M604.95 420.8h0M607.3 415.2h0M607.3 418h0M612 415.2h0M614.35 418h0M614.35 420.8h0M619.05 415.2h0M619.05 418h0M588.5 431.7h0M590.85 428.9h0M590.85 434.5h0M593.2 428.9h0M593.2 434.5h0M595.55 428.9h0M597.9 428.9h0M597.9 431.7h0M600.25 434.5h0M602.6 428.9h0M602.6 431.7h0M602.6 434.5h0M604.95 428.9h0M604.95 431.7h0M607.3 428.9h0M607.3 431.7h0M609.65 428.9h0M609.65 431.7h0M609.65 434.5h0M612 428.9h0M612 431.7h0M612 434.5h0M614.35 434.5h0M619.05 431.7h0M588.5 442.6h0M588.5 448.2h0M590.85 445.4h0M593.2 442.6h0M593.2 445.4h0M593.2 448.2h0M595.55 442.6h0M595.55 448.2h0M597.9 442.6h0M597.9 445.4h0M600.25 442.6h0M602.6 448.2h0M604.95 442.6h0M604.95 445.4h0M607.3 442.6h0M609.65 442.6h0M609.65 445.4h0M612 442.6h0M612 445.4h0M612 448.2h0M616.7 442.6h0M616.7 445.4h0M619.05 442.6h0M619.05 445.4h0M619.05 448.2h0M588.5 456.3h0M588.5 459.1h0M588.5 461.9h0M590.85 456.3h0M590.85 459.1h0M595.55 456.3h0M595.55 459.1h0M597.9 456.3h0M597.9 461.9h0M600.25 456.3h0M600.25 459.1h0M607.3 456.3h0M607.3 461.9h0M609.65 459.1h0M614.35 456.3h0M614.35 459.1h0M614.35 461.9h0M616.7 456.3h0M616.7 459.1h0M619.05 456.3h0M619.05 459.1h0M588.5 472.8h0M588.5 475.6h0M590.85 475.6h0M593.2 470h0M595.55 470h0M595.55 475.6h0M597.9 470h0M597.9 475.6h0M600.25 470h0M600.25 472.8h0M602.6 470h0M602.6 472.8h0M604.95 470h0M604.95 472.8h0M607.3 470h0M607.3 472.8h0M607.3 475.6h0M609.65 470h0M609.65 472.8h0M612 470h0M614.35 472.8h0M616.7 470h0M619.05 470h0M619.05 472.8h0M588.5 483.7h0M588.5 486.5h0M590.85 486.5h0M590.85 489.3h0M595.55 483.7h0M595.55 486.5h0M597.9 483.7h0M597.9 486.5h0M602.6 483.7h0M602.6 489.3h0M607.3 483.7h0M607.3 486.5h0M609.65 483.7h0M612 486.5h0M612 489.3h0M614.35 483.7h0M614.35 486.5h0M616.7 486.5h0M616.7 489.3h0M619.05 483.7h0M619.05 489.3h0" stroke="#4cb04a" stroke-width="1.8" stroke-linecap="square"/>
<g stroke="#45a845" stroke-width="0.9" fill="none">
<path d="M588 396 H604 L607 393 H619"/>
<path d="M588 409.7 H604 L607 406.7 H619"/>
<path d="M588 423.4 H604 L607 420.4 H619"/>
<path d="M588 437.1 H604 L607 434.1 H619"/>
<path d="M588 450.8 H604 L607 447.8 H619"/>
<path d="M588 464.5 H604 L607 461.5 H619"/>
<path d="M588 478.2 H604 L607 475.2 H619"/>
<path d="M588 491.9 H604 L607 488.9 H619"/>
</g>
<path d="M580 466 L587 462 L587 472 L582 470 Z" fill="#2e6e5c"/>
<path d="M375.7 259.6h0M375.7 265.6h0M375.7 272.2h0M375.7 286.5h0M375.7 293h0M375.7 298.8h0M500.7 244.5h0M500.7 249.5h0M500.7 257h0M500.7 262.5h0M413.6 328.4h0M489.4 338.2h0M499 338.2h0M419 201.5h0M425 201.5h0M432 201.5h0M440 201.5h0M446 201.5h0M423 206.5h0M429 206.5h0M436 206.5h0M442 206.5h0M449 206.5h0M516.2 178h0M523.4 178h0M512 185.3h0M519.3 185.3h0M527 185.3h0M534.5 185.3h0M541 185.3h0M587.5 191.25h0M594 191.25h0M599 191.25h0M606 191.25h0M635.8 191.25h0M642.5 191.25h0M647.5 191.25h0M653.5 191.25h0M663.5 246.5h0M683 246.5h0M586.4 285.6h0M586.4 292.2h0M586.4 297.8h0M586.4 304.5h0M603.2 285.6h0M603.2 292.2h0M603.2 297.8h0M603.2 304.5h0M623 291.3h0M642.5 285.6h0M642.5 317h0M673 285.6h0M673 317h0M563 334.3h0M664 360h0M673 360h0M413 342.6h0M413 351h0M413 369.2h0M413 378h0M405.5 478.3h0M378.6 574.8h0M378.6 582h0M378.6 588h0M378.6 594.4h0M378.6 600.2h0M378.6 606.6h0M378.6 612.4h0M378.6 619.2h0M402 609.7h0M402 641h0M432.8 609.7h0M432.8 641h0M462.2 618h0M513.6 618h0M523.6 633.6h0M523.6 645h0M555.8 529.5h0M562.6 529.5h0M568.8 529.5h0M575.5 529.5h0M581.6 529.5h0M588.4 529.5h0M594.3 529.5h0M601.1 529.5h0M555.8 535.1h0M562.6 535.1h0M568.8 535.1h0M575.5 535.1h0M581.6 535.1h0M588.4 535.1h0M594.3 535.1h0M601.1 535.1h0M592 555.3h0M599.3 555.3h0M606.3 555.3h0M599.3 560.5h0M606.3 560.5h0M599.3 565.9h0M606.3 565.9h0M625.2 557h0M631.5 557h0M637.5 557h0M625.2 562h0M631.5 562h0M637.5 562h0M588.8 577.3h0M594 577.3h0M599.3 577.3h0M606.3 577.3h0M588.8 582.3h0M594 582.3h0M599.3 582.3h0M600 590.3h0M606 590.3h0M611.3 590.3h0M600 595h0M606 595h0M611.3 595h0M606 600.3h0M589 612h0M594.3 612h0M599.5 612h0M606 612h0M589 617h0M594.3 617h0M599.5 617h0M580.2 643h0M586.4 643h0M593 643h0M599.3 643h0M605 643h0M612 643h0M618 643h0M624.7 643h0M647.4 640h0M653.6 640h0M538.9 633.5h0M538.9 645h0M605 511.4h0" stroke="#58dc22" stroke-width="4.2" stroke-linecap="round"/>
<path d="M370.5 346.5h0M370.5 351.2h0M370.5 360.6h0M370.5 365.3h0M370.5 370h0M370.5 374.7h0M370.5 379.4h0M370.5 384.1h0M370.5 388.8h0M370.5 393.5h0M370.5 398.2h0M370.5 402.9h0M370.5 407.6h0M370.5 412.3h0M370.5 417h0M370.5 431.1h0M370.5 435.8h0M370.5 440.5h0M370.5 445.2h0M370.5 449.9h0M370.5 454.6h0M370.5 459.3h0M370.5 464h0M370.5 506.3h0M370.5 511h0M370.5 515.7h0M370.5 520.4h0M370.5 525.1h0M370.5 529.8h0M370.5 534.5h0M370.5 539.2h0M370.5 543.9h0M370.5 548.6h0M375.2 351.2h0M375.2 355.9h0M375.2 360.6h0M375.2 365.3h0M375.2 370h0M375.2 374.7h0M375.2 379.4h0M375.2 384.1h0M375.2 388.8h0M375.2 393.5h0M375.2 402.9h0M375.2 407.6h0M375.2 412.3h0M375.2 421.7h0M375.2 431.1h0M375.2 435.8h0M375.2 440.5h0M375.2 445.2h0M375.2 449.9h0M375.2 454.6h0M375.2 459.3h0M375.2 506.3h0M375.2 511h0M375.2 515.7h0M375.2 520.4h0M375.2 525.1h0M375.2 529.8h0M375.2 534.5h0M375.2 539.2h0M375.2 543.9h0M375.2 548.6h0M375.2 553.3h0M379.9 346.5h0M379.9 351.2h0M379.9 355.9h0M379.9 360.6h0M379.9 365.3h0M379.9 370h0M379.9 379.4h0M379.9 384.1h0M379.9 393.5h0M379.9 398.2h0M379.9 402.9h0M379.9 407.6h0M379.9 412.3h0M379.9 421.7h0M379.9 426.4h0M379.9 431.1h0M379.9 435.8h0M379.9 440.5h0M379.9 445.2h0M379.9 449.9h0M379.9 454.6h0M379.9 459.3h0M379.9 464h0M379.9 506.3h0M379.9 511h0M379.9 520.4h0M379.9 525.1h0M379.9 529.8h0M379.9 534.5h0M379.9 539.2h0M379.9 548.6h0M379.9 553.3h0M384.6 346.5h0M384.6 351.2h0M384.6 360.6h0M384.6 374.7h0M384.6 379.4h0M384.6 384.1h0M384.6 388.8h0M384.6 398.2h0M384.6 402.9h0M384.6 407.6h0M384.6 412.3h0M384.6 417h0M384.6 421.7h0M384.6 426.4h0M384.6 431.1h0M384.6 435.8h0M384.6 440.5h0M384.6 445.2h0M384.6 449.9h0M384.6 454.6h0M384.6 459.3h0M384.6 506.3h0M384.6 511h0M384.6 515.7h0M384.6 520.4h0M384.6 525.1h0M384.6 529.8h0M384.6 534.5h0M384.6 539.2h0M384.6 543.9h0M384.6 548.6h0M389.3 351.2h0M389.3 355.9h0M389.3 360.6h0M389.3 365.3h0M389.3 370h0M389.3 374.7h0M389.3 384.1h0M389.3 393.5h0M389.3 398.2h0M389.3 402.9h0M389.3 407.6h0M389.3 412.3h0M389.3 421.7h0M389.3 426.4h0M389.3 431.1h0M389.3 440.5h0M389.3 445.2h0M389.3 449.9h0M389.3 459.3h0M389.3 464h0M389.3 511h0M389.3 515.7h0M389.3 520.4h0M389.3 525.1h0M389.3 529.8h0M389.3 534.5h0M389.3 539.2h0M389.3 543.9h0M389.3 548.6h0M389.3 553.3h0M520.9 605.2h0M520.9 609.9h0M520.9 614.6h0M464.5 233.9h0M464.5 238.6h0M600.8 257.4h0M605.5 257.4h0M450.4 534.7h0M455.1 534.7h0M459.8 534.7h0M558.5 285.6h0M558.5 299.7h0M558.5 304.4h0M469.2 248h0M567.9 342h0M567.9 346.7h0M567.9 351.4h0M572.6 342h0M572.6 346.7h0M572.6 351.4h0M572.6 356.1h0M403.4 313.8h0M403.4 318.5h0M403.4 323.2h0M403.4 327.9h0M408.1 313.8h0M408.1 323.2h0M408.1 327.9h0M488 233.9h0M492.7 233.9h0M497.4 233.9h0M502.1 233.9h0M506.8 233.9h0M577.3 468.9h0M577.3 473.6h0M577.3 478.3h0M577.3 487.7h0M577.3 497.1h0M572.6 468.9h0M582 468.9h0M572.6 327.9h0M572.6 332.6h0M572.6 337.3h0M577.3 327.9h0M577.3 332.6h0M577.3 337.3h0M657.2 257.4h0M661.9 257.4h0M690.1 403.1h0M577.3 313.8h0M577.3 323.2h0M577.3 342h0M577.3 351.4h0M614.9 224.5h0M591.4 252.7h0M619.6 337.3h0M469.2 511.2h0M469.2 515.9h0M473.9 506.5h0M473.9 511.2h0M473.9 515.9h0M652.5 492.4h0M657.2 492.4h0M661.9 492.4h0M666.6 492.4h0M671.3 548.8h0M676 548.8h0M680.7 548.8h0M685.4 548.8h0M582 327.9h0M586.7 327.9h0M591.4 327.9h0M596.1 327.9h0M577.3 271.5h0M577.3 276.2h0M582 266.8h0M586.7 266.8h0M586.7 271.5h0M586.7 276.2h0M619.6 262.1h0M624.3 262.1h0M629 262.1h0M633.7 262.1h0M638.4 262.1h0M643.1 262.1h0M680.7 562.9h0M680.7 572.3h0M685.4 562.9h0M685.4 567.6h0M685.4 572.3h0M685.4 577h0M690.1 562.9h0M690.1 567.6h0M690.1 572.3h0M502.1 262.1h0M389.3 417.2h0M389.3 421.9h0M389.3 431.3h0M389.3 436h0M389.3 445.4h0M394 412.5h0M394 417.2h0M394 421.9h0M394 426.6h0M394 431.3h0M394 436h0M394 440.7h0M394 445.4h0M455.1 356.1h0M459.8 356.1h0M464.5 356.1h0M469.2 356.1h0M473.9 356.1h0M478.6 356.1h0M525.6 605.2h0M525.6 609.9h0M530.3 605.2h0M530.3 609.9h0M530.3 614.6h0M535 605.2h0M535 609.9h0M535 614.6h0M544.4 186.9h0M544.4 191.6h0M549.1 186.9h0M549.1 191.6h0M553.8 186.9h0M553.8 191.6h0M459.8 595.8h0M459.8 600.5h0M459.8 605.2h0M464.5 595.8h0M464.5 600.5h0M464.5 605.2h0M469.2 595.8h0M469.2 600.5h0M469.2 605.2h0M572.6 530h0M685.4 182.2h0M685.4 186.9h0M685.4 191.6h0M685.4 196.3h0M685.4 210.4h0M690.1 182.2h0M690.1 186.9h0M690.1 191.6h0M690.1 196.3h0M690.1 201h0M690.1 205.7h0M652.5 346.7h0M657.2 577h0M657.2 581.7h0M657.2 586.4h0M657.2 591.1h0M657.2 595.8h0M657.2 600.5h0M657.2 605.2h0M657.2 609.9h0M657.2 619.3h0M624.3 201h0M624.3 205.7h0M629 201h0M633.7 201h0M544.4 586.4h0M544.4 591.1h0M549.1 586.4h0M549.1 591.1h0M394 497.1h0M596.1 609.9h0M403.4 506.5h0M403.4 511.2h0M403.4 515.9h0M403.4 520.6h0M403.4 525.3h0M403.4 534.7h0M403.4 539.4h0M403.4 544.1h0M408.1 506.5h0M408.1 511.2h0M408.1 515.9h0M408.1 525.3h0M408.1 530h0M408.1 534.7h0M408.1 539.4h0M408.1 544.1h0M600.8 191.6h0M600.8 196.3h0M600.8 201h0M605.5 191.6h0M605.5 196.3h0M605.5 201h0M605.5 205.7h0M610.2 196.3h0M610.2 205.7h0M582 548.8h0M629 379.6h0M629 384.3h0M629 389h0M629 393.7h0M629 398.4h0M629 403.1h0M633.7 384.3h0M633.7 389h0M633.7 393.7h0M633.7 398.4h0M624.3 356.1h0M624.3 360.8h0M624.3 365.5h0M624.3 370.2h0M652.5 252.7h0M652.5 257.4h0M652.5 262.1h0M652.5 266.8h0M389.3 374.9h0M389.3 379.6h0M394 370.2h0M394 379.6h0M398.7 370.2h0M398.7 374.9h0M398.7 379.6h0M417.5 534.7h0M417.5 539.4h0M417.5 544.1h0M417.5 548.8h0M417.5 553.5h0M417.5 558.2h0M417.5 562.9h0M417.5 567.6h0M422.2 539.4h0M422.2 544.1h0M422.2 553.5h0M422.2 558.2h0M422.2 562.9h0M422.2 567.6h0M558.5 638.1h0M464.5 520.6h0M497.4 534.7h0M582 454.8h0M582 459.5h0M582 473.6h0M582 478.3h0M582 483h0M582 487.7h0M582 492.4h0M586.7 454.8h0M586.7 459.5h0M586.7 464.2h0M586.7 468.9h0M586.7 473.6h0M586.7 478.3h0M586.7 483h0M586.7 487.7h0M586.7 492.4h0M516.2 191.6h0M520.9 191.6h0M525.6 191.6h0M530.3 191.6h0M591.4 219.8h0M567.9 389h0M572.6 389h0M577.3 389h0M582 389h0M370.5 332.6h0M375.2 332.6h0M379.9 332.6h0M379.9 600.5h0M624.3 323.2h0M596.1 497.1h0M408.1 346.7h0M629 318.5h0M629 323.2h0M633.7 318.5h0M633.7 323.2h0M464.5 511.2h0M426.9 323.2h0M426.9 327.9h0M426.9 337.3h0M426.9 342h0M431.6 323.2h0M431.6 332.6h0M431.6 337.3h0M431.6 342h0M464.5 501.8h0M464.5 506.5h0M464.5 515.9h0M464.5 525.3h0M469.2 506.5h0M469.2 520.6h0M469.2 525.3h0M403.4 548.8h0M403.4 553.5h0M403.4 558.2h0M403.4 562.9h0M567.9 450.1h0M572.6 450.1h0M577.3 450.1h0M582 450.1h0M586.7 450.1h0M422.2 642.8h0M375.2 224.5h0M375.2 229.2h0M375.2 233.9h0M375.2 238.6h0M375.2 243.3h0M582 534.7h0M582 544.1h0M582 553.5h0M582 562.9h0M582 567.6h0M685.4 285.6h0M690.1 285.6h0M690.1 295h0M412.8 262.1h0M614.9 624h0M408.1 501.8h0M408.1 520.6h0M431.6 548.8h0M431.6 558.2h0M431.6 562.9h0M436.3 548.8h0M436.3 553.5h0M436.3 558.2h0M436.3 562.9h0M441 558.2h0M441 562.9h0M459.8 384.3h0M464.5 384.3h0M633.7 605.2h0M478.6 591.1h0M478.6 595.8h0M478.6 600.5h0M483.3 591.1h0M483.3 595.8h0M483.3 600.5h0M417.5 309.1h0M417.5 323.2h0M417.5 327.9h0M417.5 332.6h0M417.5 337.3h0M417.5 342h0M417.5 346.7h0M544.4 172.8h0M666.6 548.8h0M436.3 337.3h0M436.3 342h0M436.3 351.4h0M441 337.3h0M441 342h0M441 351.4h0M629 271.5h0M629 276.2h0M629 280.9h0M629 285.6h0M629 290.3h0M629 295h0M629 299.7h0M629 304.4h0M629 309.1h0M497.4 276.2h0M497.4 280.9h0M502.1 276.2h0M506.8 276.2h0M506.8 280.9h0M398.7 262.1h0M398.7 266.8h0M398.7 271.5h0M398.7 276.2h0M398.7 280.9h0M398.7 285.6h0M398.7 290.3h0M398.7 295h0M403.4 257.4h0M403.4 266.8h0M403.4 271.5h0M403.4 276.2h0M403.4 280.9h0M403.4 285.6h0M403.4 290.3h0M403.4 295h0M412.8 384.3h0M619.6 276.2h0M652.5 379.6h0M441 624h0M643.1 205.7h0M596.1 182.2h0M596.1 186.9h0M600.8 182.2h0M600.8 186.9h0M643.1 248h0M643.1 252.7h0M643.1 257.4h0M530.3 238.6h0M535 238.6h0M539.7 238.6h0M544.4 238.6h0M567.9 628.7h0M379.9 487.7h0M600.8 243.3h0M511.5 638.1h0M671.3 304.4h0M600.8 370.2h0M605.5 370.2h0M610.2 370.2h0M614.9 370.2h0M619.6 370.2h0M469.2 530h0M473.9 520.6h0M473.9 525.3h0M455.1 605.2h0M520.9 177.5h0M525.6 177.5h0M530.3 177.5h0M535 177.5h0M539.7 177.5h0M469.2 544.1h0M469.2 553.5h0M473.9 539.4h0M473.9 544.1h0M473.9 548.8h0M473.9 553.5h0M478.6 539.4h0M478.6 544.1h0M478.6 553.5h0M436.3 586.4h0M643.1 342h0M647.8 342h0M652.5 342h0M657.2 342h0M661.9 342h0M666.6 342h0M408.1 548.8h0M412.8 548.8h0M422.2 548.8h0M441 403.1h0M567.9 473.6h0M572.6 473.6h0M647.8 389h0M582 210.4h0M586.7 210.4h0M591.4 210.4h0M596.1 210.4h0M600.8 210.4h0M680.7 558.2h0M680.7 577h0M629 327.9h0M629 332.6h0M629 337.3h0M629 342h0M629 346.7h0M633.7 327.9h0M633.7 332.6h0M633.7 337.3h0M633.7 342h0M633.7 346.7h0M572.6 219.8h0M539.7 614.6h0M539.7 619.3h0M539.7 624h0M544.4 614.6h0M544.4 619.3h0M544.4 624h0M426.9 346.7h0M572.6 407.8h0M572.6 412.5h0M577.3 407.8h0M577.3 412.5h0M582 407.8h0M614.9 233.9h0M614.9 238.6h0M676 356.1h0M676 360.8h0M676 365.5h0M680.7 356.1h0M680.7 360.8h0M680.7 365.5h0M553.8 506.5h0M553.8 511.2h0M553.8 520.6h0M553.8 525.3h0M553.8 530h0M450.4 346.7h0M647.8 346.7h0M647.8 351.4h0M647.8 356.1h0M647.8 360.8h0M647.8 365.5h0M647.8 370.2h0M647.8 374.9h0M643.1 581.7h0M643.1 586.4h0M647.8 577h0M647.8 581.7h0M647.8 586.4h0M464.5 642.8h0M469.2 642.8h0M549.1 511.2h0M549.1 515.9h0M549.1 520.6h0M549.1 525.3h0M553.8 515.9h0M558.5 520.6h0M558.5 525.3h0M539.7 243.3h0M539.7 248h0M539.7 252.7h0M539.7 257.4h0M539.7 266.8h0M539.7 271.5h0M464.5 346.7h0M464.5 360.8h0M469.2 351.4h0M469.2 360.8h0M473.9 346.7h0M473.9 351.4h0M473.9 360.8h0M690.1 647.5h0M535 168.1h0M511.5 511.2h0M671.3 403.1h0M671.3 407.8h0M671.3 412.5h0M652.5 450.1h0M647.8 534.7h0M652.5 534.7h0M657.2 534.7h0M661.9 534.7h0M666.6 534.7h0M671.3 534.7h0M492.7 172.8h0M497.4 172.8h0M502.1 172.8h0M506.8 172.8h0M511.5 172.8h0M671.3 280.9h0M671.3 285.6h0M676 280.9h0M676 285.6h0M680.7 280.9h0M680.7 285.6h0M549.1 276.2h0M553.8 276.2h0M558.5 276.2h0M563.2 276.2h0M567.9 276.2h0M605.5 262.1h0M610.2 262.1h0M600.8 577h0M530.3 619.3h0M464.5 379.6h0M633.7 379.6h0M638.4 379.6h0M638.4 384.3h0M563.2 595.8h0M563.2 600.5h0M563.2 605.2h0M567.9 595.8h0M567.9 600.5h0M567.9 605.2h0M638.4 360.8h0M643.1 360.8h0M652.5 360.8h0M657.2 360.8h0M661.9 360.8h0M614.9 262.1h0M614.9 266.8h0M614.9 271.5h0M614.9 276.2h0M614.9 280.9h0M614.9 285.6h0M614.9 290.3h0M614.9 295h0M614.9 299.7h0M614.9 304.4h0M394 346.7h0M398.7 346.7h0M680.7 210.4h0M394 454.8h0M394 459.5h0M394 464.2h0M394 468.9h0M394 473.6h0M394 478.3h0M394 483h0M394 487.7h0M394 492.4h0M596.1 337.3h0M596.1 342h0M596.1 356.1h0M431.6 440.7h0M666.6 356.1h0M638.4 581.7h0M638.4 586.4h0M638.4 591.1h0M643.1 591.1h0M638.4 407.8h0M643.1 407.8h0M647.8 407.8h0M652.5 407.8h0M657.2 407.8h0M661.9 407.8h0M408.1 426.6h0M389.3 351.4h0M389.3 360.8h0M394 351.4h0M394 356.1h0M394 360.8h0M398.7 356.1h0M398.7 360.8h0M629 558.2h0M629 436h0M567.9 478.3h0M572.6 478.3h0M375.2 572.3h0M375.2 577h0M375.2 581.7h0M375.2 586.4h0M375.2 591.1h0M375.2 595.8h0M375.2 600.5h0M610.2 309.1h0M614.9 309.1h0M619.6 309.1h0M624.3 309.1h0M633.7 309.1h0M671.3 177.5h0M671.3 182.2h0M680.7 182.2h0M441 619.3h0M553.8 233.9h0M577.3 633.4h0M408.1 398.4h0M661.9 168.1h0M666.6 168.1h0M671.3 168.1h0M506.8 196.3h0M511.5 196.3h0M516.2 196.3h0M520.9 196.3h0M525.6 196.3h0M530.3 196.3h0M525.6 163.4h0M525.6 168.1h0M525.6 172.8h0M530.3 163.4h0M530.3 168.1h0M530.3 172.8h0M563.2 506.5h0M370.5 501.8h0M497.4 332.6h0M497.4 337.3h0M502.1 332.6h0M502.1 337.3h0M661.9 295h0M661.9 299.7h0M661.9 304.4h0M666.6 295h0M666.6 299.7h0M666.6 304.4h0M666.6 309.1h0M671.3 309.1h0M652.5 520.6h0M657.2 520.6h0M661.9 520.6h0M666.6 520.6h0M450.4 276.2h0M450.4 285.6h0M450.4 290.3h0M450.4 295h0M450.4 299.7h0M455.1 276.2h0M455.1 280.9h0M455.1 285.6h0M455.1 295h0M455.1 299.7h0M436.3 534.7h0M506.8 332.6h0M506.8 337.3h0M511.5 332.6h0M516.2 337.3h0M605.5 530h0M605.5 534.7h0M605.5 539.4h0M605.5 544.1h0M605.5 548.8h0M605.5 553.5h0M610.2 530h0M610.2 534.7h0M610.2 539.4h0M610.2 544.1h0M403.4 332.6h0M408.1 332.6h0M412.8 332.6h0M502.1 248h0M638.4 553.5h0M638.4 558.2h0M638.4 562.9h0M643.1 553.5h0M643.1 562.9h0M408.1 417.2h0M408.1 421.9h0M408.1 431.3h0M408.1 436h0M572.6 591.1h0M506.8 562.9h0M657.2 313.8h0M685.4 539.4h0M455.1 562.9h0M455.1 567.6h0M459.8 562.9h0M558.5 360.8h0M558.5 365.5h0M563.2 356.1h0M563.2 365.5h0M680.7 186.9h0M680.7 191.6h0M586.7 280.9h0M647.8 379.6h0M647.8 384.3h0M647.8 398.4h0M629 186.9h0M633.7 186.9h0M638.4 186.9h0M643.1 186.9h0M647.8 186.9h0M398.7 562.9h0M661.9 515.9h0M666.6 511.2h0M563.2 562.9h0M563.2 567.6h0M567.9 562.9h0M567.9 567.6h0M436.3 501.8h0M614.9 360.8h0M506.8 186.9h0M511.5 186.9h0M516.2 186.9h0M520.9 186.9h0M502.1 215.1h0M506.8 215.1h0M511.5 215.1h0M516.2 215.1h0M549.1 215.1h0M567.9 464.2h0M572.6 464.2h0M577.3 464.2h0M652.5 285.6h0M652.5 290.3h0M657.2 280.9h0M657.2 285.6h0M657.2 290.3h0M661.9 280.9h0M661.9 285.6h0M661.9 290.3h0M567.9 581.7h0M384.6 182.2h0M492.7 530h0M492.7 534.7h0M492.7 544.1h0M492.7 548.8h0M525.6 351.4h0M539.7 558.2h0M539.7 562.9h0M539.7 567.6h0M539.7 572.3h0M539.7 577h0M539.7 581.7h0M431.6 379.6h0M431.6 384.3h0M431.6 389h0M436.3 379.6h0M436.3 384.3h0M441 384.3h0M441 389h0M483.3 515.9h0M483.3 520.6h0M483.3 525.3h0M488 515.9h0M488 525.3h0M398.7 393.7h0M638.4 619.3h0M633.7 581.7h0M370.5 219.8h0M370.5 224.5h0M370.5 229.2h0M370.5 238.6h0M370.5 243.3h0M375.2 219.8h0M614.9 539.4h0M394 393.7h0M403.4 393.7h0M408.1 393.7h0M417.5 365.5h0M412.8 233.9h0M666.6 421.9h0M671.3 421.9h0M676 421.9h0M680.7 421.9h0M596.1 309.1h0M596.1 313.8h0M596.1 323.2h0M596.1 332.6h0M600.8 295h0M600.8 299.7h0M605.5 295h0M605.5 299.7h0M610.2 295h0M610.2 299.7h0M591.4 633.4h0M666.6 459.5h0M412.8 572.3h0M412.8 581.7h0M417.5 572.3h0M652.5 168.1h0M652.5 172.8h0M652.5 177.5h0M652.5 182.2h0M652.5 186.9h0M652.5 191.6h0M657.2 168.1h0M657.2 172.8h0M657.2 177.5h0M657.2 186.9h0M657.2 191.6h0M511.5 276.2h0M511.5 280.9h0M516.2 276.2h0M516.2 280.9h0M530.3 520.6h0M530.3 525.3h0M459.8 266.8h0M459.8 271.5h0M591.4 271.5h0M596.1 271.5h0M600.8 271.5h0M455.1 233.9h0M459.8 233.9h0M633.7 299.7h0M638.4 299.7h0M643.1 299.7h0M647.8 299.7h0M652.5 299.7h0M464.5 323.2h0M464.5 327.9h0M464.5 332.6h0M469.2 318.5h0M469.2 323.2h0M469.2 327.9h0M469.2 332.6h0M473.9 318.5h0M473.9 323.2h0M676 572.3h0M676 577h0M676 581.7h0M680.7 581.7h0M553.8 572.3h0M553.8 577h0M553.8 581.7h0M553.8 586.4h0M520.9 280.9h0M520.9 628.7h0M455.1 609.9h0M417.5 266.8h0M417.5 271.5h0M417.5 276.2h0M530.3 544.1h0M530.3 553.5h0M530.3 558.2h0M530.3 562.9h0M530.3 567.6h0M530.3 572.3h0M530.3 577h0M530.3 581.7h0M596.1 257.4h0M596.1 262.1h0M596.1 266.8h0M596.1 276.2h0M596.1 280.9h0M596.1 285.6h0M596.1 290.3h0M600.8 229.2h0M600.8 233.9h0M600.8 238.6h0M600.8 248h0M600.8 252.7h0M464.5 304.4h0M464.5 309.1h0M464.5 313.8h0M464.5 318.5h0M469.2 304.4h0M469.2 309.1h0M473.9 309.1h0M473.9 313.8h0M455.1 581.7h0M459.8 581.7h0M464.5 581.7h0M469.2 581.7h0M624.3 454.8h0M629 454.8h0M633.7 454.8h0M544.4 290.3h0M544.4 299.7h0M549.1 285.6h0M549.1 290.3h0M549.1 295h0M549.1 299.7h0M553.8 285.6h0M553.8 299.7h0M408.1 487.7h0M412.8 487.7h0M417.5 487.7h0M633.7 276.2h0M638.4 276.2h0M643.1 276.2h0M647.8 276.2h0M666.6 436h0M455.1 595.8h0M455.1 600.5h0M661.9 309.1h0M577.3 642.8h0M502.1 280.9h0M502.1 285.6h0M502.1 290.3h0M525.6 600.5h0M530.3 600.5h0M535 600.5h0M539.7 600.5h0M586.7 572.3h0M586.7 577h0M591.4 572.3h0M591.4 577h0M596.1 577h0M445.7 243.3h0M445.7 248h0M445.7 252.7h0M450.4 243.3h0M450.4 248h0M441 248h0M652.5 614.6h0M652.5 624h0M652.5 628.7h0M657.2 614.6h0M657.2 628.7h0M572.6 520.6h0M577.3 520.6h0M582 520.6h0M586.7 520.6h0M591.4 520.6h0M690.1 548.8h0M586.7 398.4h0M586.7 403.1h0M586.7 407.8h0M671.3 370.2h0M676 370.2h0M680.7 370.2h0M455.1 501.8h0M455.1 506.5h0M459.8 501.8h0M459.8 506.5h0M459.8 511.2h0M544.4 196.3h0M544.4 201h0M544.4 210.4h0M544.4 215.1h0M633.7 586.4h0M661.9 638.1h0M661.9 647.5h0M558.5 506.5h0M558.5 511.2h0M558.5 515.9h0M488 276.2h0M488 280.9h0M488 285.6h0M488 290.3h0M441 548.8h0M582 581.7h0M582 586.4h0M582 591.1h0M582 595.8h0M582 600.5h0M614.9 591.1h0M412.8 252.7h0M417.5 248h0M417.5 252.7h0M417.5 257.4h0M417.5 262.1h0M638.4 548.8h0M643.1 548.8h0M535 327.9h0M539.7 327.9h0M544.4 327.9h0M549.1 327.9h0M629 511.2h0M690.1 624h0M690.1 628.7h0M671.3 266.8h0M676 266.8h0M619.6 342h0M624.3 534.7h0M624.3 539.4h0M624.3 544.1h0M629 534.7h0M629 539.4h0M629 544.1h0M614.9 374.9h0M614.9 379.6h0M619.6 374.9h0M619.6 379.6h0M624.3 374.9h0M624.3 379.6h0M624.3 384.3h0M661.9 544.1h0M586.7 515.9h0M586.7 525.3h0M586.7 530h0M586.7 534.7h0M586.7 539.4h0M586.7 544.1h0M586.7 548.8h0M591.4 515.9h0M591.4 525.3h0M591.4 530h0M591.4 534.7h0M591.4 539.4h0M591.4 544.1h0M591.4 548.8h0M643.1 544.1h0M647.8 544.1h0M652.5 544.1h0M657.2 544.1h0M426.9 515.9h0M426.9 520.6h0M431.6 515.9h0M431.6 520.6h0M558.5 600.5h0M610.2 285.6h0M619.6 285.6h0M624.3 285.6h0M389.3 492.4h0M389.3 497.1h0M389.3 501.8h0M389.3 506.5h0M389.3 515.9h0M389.3 525.3h0M572.6 595.8h0M572.6 600.5h0M666.6 544.1h0M671.3 544.1h0M676 544.1h0M647.8 464.2h0M633.7 233.9h0M511.5 572.3h0M516.2 572.3h0M520.9 572.3h0M525.6 572.3h0M535 572.3h0M520.9 266.8h0M596.1 530h0M596.1 534.7h0M596.1 539.4h0M596.1 548.8h0M596.1 553.5h0M596.1 558.2h0M596.1 562.9h0M596.1 567.6h0M403.4 595.8h0M403.4 600.5h0M403.4 605.2h0M403.4 609.9h0M558.5 572.3h0M563.2 572.3h0M567.9 572.3h0M572.6 572.3h0M577.3 572.3h0M582 572.3h0M657.2 624h0M661.9 624h0M661.9 628.7h0M417.5 407.8h0M422.2 407.8h0M553.8 224.5h0M525.6 182.2h0M530.3 186.9h0M535 191.6h0M426.9 384.3h0M605.5 619.3h0M610.2 271.5h0M610.2 276.2h0M610.2 280.9h0M610.2 290.3h0M610.2 304.4h0M610.2 313.8h0M572.6 379.6h0M384.6 384.3h0M417.5 243.3h0M422.2 243.3h0M422.2 248h0M422.2 252.7h0M422.2 257.4h0M445.7 515.9h0M445.7 530h0M450.4 515.9h0M450.4 525.3h0M661.9 421.9h0M600.8 501.8h0M600.8 506.5h0M600.8 511.2h0M600.8 515.9h0M605.5 497.1h0M605.5 501.8h0M605.5 506.5h0M605.5 511.2h0M412.8 407.8h0M412.8 412.5h0M412.8 417.2h0M412.8 421.9h0M412.8 431.3h0M412.8 436h0M412.8 440.7h0M417.5 412.5h0M417.5 417.2h0M417.5 426.6h0M417.5 431.3h0M417.5 440.7h0M582 445.4h0M535 506.5h0M535 511.2h0M535 515.9h0M535 520.6h0M535 525.3h0M535 530h0M535 534.7h0M535 539.4h0M539.7 506.5h0M539.7 511.2h0M539.7 515.9h0M539.7 520.6h0M539.7 525.3h0M539.7 530h0M539.7 534.7h0M539.7 539.4h0M436.3 412.5h0M389.3 337.3h0M389.3 342h0M389.3 346.7h0M394 337.3h0M652.5 356.1h0M657.2 346.7h0M657.2 351.4h0M657.2 356.1h0M558.5 177.5h0M384.6 501.8h0M539.7 313.8h0M394 295h0M394 299.7h0M394 304.4h0M394 309.1h0M394 318.5h0M633.7 403.1h0M633.7 412.5h0M638.4 393.7h0M638.4 398.4h0M638.4 412.5h0M431.6 525.3h0M431.6 530h0M436.3 530h0M441 525.3h0M441 530h0M426.9 431.3h0M426.9 436h0M431.6 431.3h0M431.6 436h0M577.3 398.4h0M582 403.1h0M450.4 553.5h0M671.3 614.6h0M676 614.6h0M680.7 614.6h0M685.4 614.6h0M567.9 454.8h0M567.9 468.9h0M619.6 638.1h0M384.6 243.3h0M610.2 624h0M610.2 628.7h0M614.9 619.3h0M614.9 628.7h0M567.9 577h0M572.6 577h0M572.6 581.7h0M577.3 577h0M577.3 581.7h0M643.1 191.6h0M643.1 196.3h0M643.1 201h0M643.1 210.4h0M520.9 252.7h0M525.6 252.7h0M530.3 252.7h0M431.6 450.1h0M511.5 271.5h0M676 337.3h0M680.7 337.3h0M685.4 337.3h0M690.1 337.3h0M666.6 182.2h0M666.6 186.9h0M666.6 196.3h0M666.6 201h0M666.6 215.1h0M666.6 219.8h0M544.4 224.5h0M544.4 233.9h0M520.9 172.8h0M535 172.8h0M539.7 172.8h0M450.4 271.5h0M567.9 356.1h0M567.9 374.9h0M567.9 379.6h0M572.6 365.5h0M572.6 370.2h0M572.6 374.9h0M572.6 384.3h0M666.6 586.4h0M567.9 614.6h0M567.9 619.3h0M567.9 624h0M567.9 633.4h0M567.9 638.1h0M577.3 548.8h0M577.3 553.5h0M577.3 558.2h0M577.3 562.9h0M577.3 567.6h0M619.6 252.7h0M619.6 257.4h0M619.6 266.8h0M389.3 233.9h0M389.3 238.6h0M389.3 248h0M389.3 252.7h0M441 313.8h0M633.7 431.3h0M638.4 431.3h0M643.1 431.3h0M647.8 431.3h0M652.5 431.3h0M657.2 431.3h0M403.4 530h0M412.8 525.3h0M412.8 530h0M483.3 266.8h0M483.3 271.5h0M483.3 276.2h0M483.3 285.6h0M483.3 290.3h0M488 266.8h0M488 271.5h0M389.3 558.2h0M389.3 562.9h0M389.3 567.6h0M389.3 572.3h0M394 562.9h0M394 572.3h0M398.7 572.3h0M638.4 642.8h0M638.4 647.5h0M643.1 642.8h0M441 426.6h0M563.2 515.9h0M563.2 520.6h0M563.2 525.3h0M563.2 530h0M563.2 534.7h0M563.2 539.4h0M563.2 544.1h0M633.7 280.9h0M582 497.1h0M582 501.8h0M586.7 497.1h0M511.5 534.7h0M506.8 290.3h0M511.5 290.3h0M516.2 290.3h0M473.9 530h0M478.6 520.6h0M478.6 525.3h0M478.6 530h0M478.6 534.7h0M384.6 487.7h0M384.6 492.4h0M384.6 497.1h0M389.3 483h0M389.3 487.7h0M586.7 285.6h0M586.7 290.3h0M591.4 280.9h0M591.4 285.6h0M591.4 290.3h0M464.5 374.9h0M464.5 389h0M577.3 614.6h0M577.3 619.3h0M577.3 628.7h0M577.3 638.1h0M577.3 647.5h0M478.6 266.8h0M492.7 515.9h0M426.9 497.1h0M370.5 196.3h0M375.2 196.3h0M379.9 196.3h0M384.6 196.3h0M549.1 172.8h0M389.3 266.8h0M394 266.8h0M577.3 431.3h0M638.4 309.1h0M643.1 309.1h0M431.6 393.7h0M436.3 393.7h0M441 393.7h0M445.7 393.7h0M450.4 393.7h0M572.6 224.5h0M572.6 229.2h0M572.6 233.9h0M572.6 238.6h0M572.6 243.3h0M572.6 248h0M572.6 252.7h0M572.6 257.4h0M572.6 262.1h0M572.6 266.8h0M520.9 201h0M520.9 205.7h0M520.9 210.4h0M520.9 215.1h0M520.9 224.5h0M525.6 201h0M525.6 205.7h0M525.6 210.4h0M525.6 215.1h0M525.6 219.8h0M525.6 224.5h0M511.5 530h0M511.5 539.4h0M516.2 534.7h0M516.2 539.4h0M379.9 290.3h0M511.5 337.3h0M511.5 346.7h0M511.5 351.4h0M511.5 356.1h0M516.2 332.6h0M516.2 342h0M516.2 346.7h0M516.2 351.4h0M516.2 356.1h0M657.2 421.9h0M539.7 262.1h0M539.7 276.2h0M539.7 280.9h0M643.1 506.5h0M647.8 506.5h0M426.9 332.6h0M431.6 346.7h0M671.3 501.8h0M614.9 243.3h0M614.9 248h0M614.9 252.7h0M614.9 257.4h0M394 548.8h0M398.7 548.8h0M652.5 276.2h0M657.2 276.2h0M370.5 304.4h0M690.1 384.3h0M652.5 210.4h0M657.2 210.4h0M661.9 210.4h0M666.6 210.4h0M671.3 210.4h0M671.3 572.3h0M671.3 577h0M671.3 581.7h0M671.3 586.4h0M676 586.4h0M676 323.2h0M680.7 323.2h0M426.9 595.8h0M629 370.2h0M426.9 534.7h0M426.9 544.1h0M426.9 548.8h0M426.9 553.5h0M426.9 558.2h0M596.1 642.8h0M549.1 595.8h0M553.8 595.8h0M553.8 600.5h0M544.4 534.7h0M544.4 539.4h0M544.4 544.1h0M544.4 553.5h0M544.4 562.9h0M544.4 572.3h0M633.7 558.2h0M633.7 567.6h0M633.7 572.3h0M633.7 577h0M417.5 351.4h0M422.2 346.7h0M422.2 351.4h0M666.6 243.3h0M629 497.1h0M629 506.5h0M629 515.9h0M629 525.3h0M629 530h0M441 323.2h0M441 327.9h0M441 332.6h0M441 346.7h0M441 356.1h0M441 360.8h0M441 365.5h0M436.3 356.1h0M558.5 262.1h0M577.3 379.6h0M582 379.6h0M586.7 379.6h0M591.4 379.6h0M643.1 487.7h0M643.1 492.4h0M643.1 497.1h0M577.3 530h0M582 530h0M459.8 313.8h0M459.8 318.5h0M459.8 323.2h0M520.9 219.8h0M502.1 572.3h0M502.1 581.7h0M506.8 572.3h0M506.8 577h0M506.8 581.7h0M582 290.3h0M582 295h0M582 299.7h0M582 304.4h0M582 309.1h0M582 313.8h0M582 318.5h0M582 323.2h0M586.7 299.7h0M586.7 304.4h0M586.7 309.1h0M586.7 313.8h0M586.7 318.5h0M586.7 323.2h0M502.1 342h0M502.1 346.7h0M502.1 351.4h0M506.8 346.7h0M506.8 351.4h0M426.9 248h0M431.6 248h0M436.3 248h0M567.9 360.8h0M567.9 365.5h0M572.6 360.8h0M455.1 577h0M577.3 417.2h0M582 417.2h0M586.7 412.5h0M535 619.3h0M530.3 624h0M676 417.2h0M676 426.6h0M676 431.3h0M676 436h0M676 440.7h0M676 445.4h0M671.3 515.9h0M384.6 577h0M384.6 586.4h0M384.6 591.1h0M384.6 595.8h0M422.2 473.6h0M422.2 478.3h0M426.9 473.6h0M426.9 478.3h0M431.6 473.6h0M431.6 478.3h0M375.2 252.7h0M379.9 233.9h0M379.9 238.6h0M379.9 248h0M379.9 257.4h0M600.8 266.8h0M600.8 276.2h0M525.6 299.7h0M530.3 299.7h0M624.3 421.9h0M586.7 262.1h0M591.4 262.1h0M657.2 642.8h0M657.2 647.5h0M516.2 600.5h0M516.2 609.9h0M516.2 614.6h0M516.2 619.3h0M549.1 219.8h0M549.1 224.5h0M549.1 229.2h0M661.9 619.3h0M661.9 633.4h0M661.9 642.8h0M676 215.1h0M544.4 628.7h0M549.1 624h0M549.1 628.7h0M511.5 525.3h0M511.5 544.1h0M516.2 525.3h0M516.2 530h0M516.2 544.1h0M553.8 558.2h0M544.4 511.2h0M544.4 515.9h0M544.4 520.6h0M544.4 525.3h0M544.4 548.8h0M469.2 257.4h0M469.2 266.8h0M469.2 271.5h0M469.2 276.2h0M469.2 280.9h0M473.9 257.4h0M473.9 262.1h0M473.9 266.8h0M473.9 271.5h0M473.9 280.9h0M661.9 431.3h0M661.9 436h0M666.6 431.3h0M685.4 600.5h0M685.4 605.2h0M685.4 609.9h0M690.1 600.5h0M690.1 605.2h0M690.1 609.9h0M370.5 454.8h0M375.2 454.8h0M375.2 464.2h0M384.6 238.6h0M394 238.6h0M436.3 398.4h0M436.3 403.1h0M436.3 407.8h0M412.8 238.6h0M469.2 577h0M473.9 567.6h0M473.9 572.3h0M473.9 577h0M445.7 262.1h0M643.1 182.2h0M643.1 215.1h0M643.1 219.8h0M643.1 224.5h0M478.6 351.4h0M398.7 544.1h0M422.2 525.3h0M426.9 525.3h0M436.3 525.3h0M516.2 360.8h0M516.2 365.5h0M511.5 238.6h0M445.7 624h0M445.7 628.7h0M450.4 628.7h0M455.1 624h0M455.1 628.7h0M375.2 417.2h0M379.9 407.8h0M379.9 417.2h0M384.6 407.8h0M600.8 525.3h0M605.5 525.3h0M610.2 525.3h0M614.9 525.3h0M619.6 525.3h0" stroke="#30b820" stroke-width="2.5" stroke-linecap="round"/>
<circle cx="580.3" cy="184.3" r="2.3" fill="#000" stroke="#58dc22" stroke-width="1.3"/>
<circle cx="613" cy="184.3" r="2.3" fill="#000" stroke="#58dc22" stroke-width="1.3"/>
<circle cx="628.7" cy="184.3" r="2.3" fill="#000" stroke="#58dc22" stroke-width="1.3"/>
<circle cx="661" cy="184.3" r="2.3" fill="#000" stroke="#58dc22" stroke-width="1.3"/>
<circle cx="413" cy="177" r="2.3" fill="#000" stroke="#58dc22" stroke-width="1.3"/>
<circle cx="452" cy="177" r="2.3" fill="#000" stroke="#58dc22" stroke-width="1.3"/>
<circle cx="672.9" cy="500.7" r="2.3" fill="#000" stroke="#58dc22" stroke-width="1.3"/>
<circle cx="683.6" cy="500.7" r="2.3" fill="#000" stroke="#58dc22" stroke-width="1.3"/>
<circle cx="672.9" cy="511.01" r="2.3" fill="#000" stroke="#58dc22" stroke-width="1.3"/>
<circle cx="683.6" cy="511.01" r="2.3" fill="#000" stroke="#58dc22" stroke-width="1.3"/>
<circle cx="672.9" cy="521.3199999999999" r="2.3" fill="#000" stroke="#58dc22" stroke-width="1.3"/>
<circle cx="683.6" cy="521.3199999999999" r="2.3" fill="#000" stroke="#58dc22" stroke-width="1.3"/>
<circle cx="672.9" cy="531.63" r="2.3" fill="#000" stroke="#58dc22" stroke-width="1.3"/>
<circle cx="683.6" cy="531.63" r="2.3" fill="#000" stroke="#58dc22" stroke-width="1.3"/>
<circle cx="672.9" cy="541.9399999999999" r="2.3" fill="#000" stroke="#58dc22" stroke-width="1.3"/>
<circle cx="683.6" cy="541.9399999999999" r="2.3" fill="#000" stroke="#58dc22" stroke-width="1.3"/>
<circle cx="672.9" cy="552.25" r="2.3" fill="#000" stroke="#58dc22" stroke-width="1.3"/>
<circle cx="683.6" cy="552.25" r="2.3" fill="#000" stroke="#58dc22" stroke-width="1.3"/>
<circle cx="672.9" cy="562.56" r="2.3" fill="#000" stroke="#58dc22" stroke-width="1.3"/>
<circle cx="683.6" cy="562.56" r="2.3" fill="#000" stroke="#58dc22" stroke-width="1.3"/>
<circle cx="672.9" cy="572.87" r="2.3" fill="#000" stroke="#58dc22" stroke-width="1.3"/>
<circle cx="683.6" cy="572.87" r="2.3" fill="#000" stroke="#58dc22" stroke-width="1.3"/>
<circle cx="672.9" cy="583.18" r="2.3" fill="#000" stroke="#58dc22" stroke-width="1.3"/>
<circle cx="683.6" cy="583.18" r="2.3" fill="#000" stroke="#58dc22" stroke-width="1.3"/>
<circle cx="672.9" cy="593.49" r="2.3" fill="#000" stroke="#58dc22" stroke-width="1.3"/>
<circle cx="683.6" cy="593.49" r="2.3" fill="#000" stroke="#58dc22" stroke-width="1.3"/>
<circle cx="672.9" cy="603.8" r="2.3" fill="#000" stroke="#58dc22" stroke-width="1.3"/>
<circle cx="683.6" cy="603.8" r="2.3" fill="#000" stroke="#58dc22" stroke-width="1.3"/>
<circle cx="672.9" cy="614.11" r="2.3" fill="#000" stroke="#58dc22" stroke-width="1.3"/>
<circle cx="683.6" cy="614.11" r="2.3" fill="#000" stroke="#58dc22" stroke-width="1.3"/>
<path d="M582.5 184.3 H611 M631 184.3 H659 M606 193 V203 M614 187 V203 M654 193 V203 M662.5 187 V203 M415 177 H450" stroke="#2e6e5c" stroke-width="1" fill="none"/>
<circle cx="419.8" cy="185.4" r="3.2" fill="#000" stroke="#58dc22" stroke-width="1.3"/>
<circle cx="449.5" cy="185.4" r="3.2" fill="#000" stroke="#58dc22" stroke-width="1.3"/>
<circle cx="558.9" cy="181.6" r="3.3" fill="#000"/><circle cx="558.9" cy="181.6" r="1.9" fill="none" stroke="#58dc22" stroke-width="0.9"/>
<circle cx="494.5" cy="181.6" r="3.0" fill="#000"/><circle cx="494.5" cy="181.6" r="1.7" fill="none" stroke="#58dc22" stroke-width="0.9"/>
<circle cx="378.6" cy="171" r="8.2" fill="#000"/><circle cx="378.6" cy="171" r="4.2" fill="none" stroke="#58dc22" stroke-width="1.6"/><path d="M378.6 162.8 V166.7 M378.6 175.3 V179.2" stroke="#008000" stroke-width="0.9"/>
<circle cx="684" cy="171" r="8.2" fill="#000"/><circle cx="684" cy="171" r="4.2" fill="none" stroke="#58dc22" stroke-width="1.6"/><path d="M684 162.8 V166.7 M684 175.3 V179.2" stroke="#008000" stroke-width="0.9"/>
<circle cx="378.5" cy="318.5" r="8.2" fill="#000"/><circle cx="378.5" cy="318.5" r="4.2" fill="none" stroke="#58dc22" stroke-width="1.6"/><path d="M378.5 310.3 V314.2 M378.5 322.8 V326.7" stroke="#008000" stroke-width="0.9"/>
<circle cx="684" cy="478" r="8.2" fill="#000"/><circle cx="684" cy="478" r="4.2" fill="none" stroke="#58dc22" stroke-width="1.6"/><path d="M684 469.8 V473.7 M684 482.3 V486.2" stroke="#008000" stroke-width="0.9"/>
<circle cx="378.5" cy="638" r="8.2" fill="#000"/><circle cx="378.5" cy="638" r="4.2" fill="none" stroke="#58dc22" stroke-width="1.6"/><path d="M378.5 629.8 V633.7 M378.5 642.3 V646.2" stroke="#008000" stroke-width="0.9"/>
<circle cx="684" cy="638" r="8.2" fill="#000"/><circle cx="684" cy="638" r="4.2" fill="none" stroke="#58dc22" stroke-width="1.6"/><path d="M684 629.8 V633.7 M684 642.3 V646.2" stroke="#008000" stroke-width="0.9"/>
<path d="M461 592 L522 538.8 V513 M466 595 L525 543 V515 M600 540 L625 519 M630 520 L642 510 M545 400 L560 388" stroke="#2e6e5c" stroke-width="1" fill="none"/>
<path d="M625 641 L633 635 H650 L655 641" stroke="#2e6e5c" stroke-width="1.1" fill="none"/>
<rect x="350.4" y="166.0" width="9.2" height="9.2" rx="3.2" transform="rotate(45 355 170.6)" fill="none" stroke="#e0b070" stroke-width="2.6"/>
<rect x="350.4" y="166.0" width="9.2" height="9.2" rx="3.2" transform="rotate(45 355 170.6)" fill="#000" stroke="#b8f03a" stroke-width="1.3"/>
<rect x="703.9" y="166.0" width="9.2" height="9.2" rx="3.2" transform="rotate(45 708.5 170.6)" fill="none" stroke="#e0b070" stroke-width="2.6"/>
<rect x="703.9" y="166.0" width="9.2" height="9.2" rx="3.2" transform="rotate(45 708.5 170.6)" fill="#000" stroke="#b8f03a" stroke-width="1.3"/>
<rect x="350.0" y="633.4" width="9.2" height="9.2" rx="3.2" transform="rotate(45 354.6 638)" fill="none" stroke="#e0b070" stroke-width="2.6"/>
<rect x="350.0" y="633.4" width="9.2" height="9.2" rx="3.2" transform="rotate(45 354.6 638)" fill="#000" stroke="#b8f03a" stroke-width="1.3"/>
<rect x="703.9" y="633.4" width="9.2" height="9.2" rx="3.2" transform="rotate(45 708.5 638)" fill="none" stroke="#e0b070" stroke-width="2.6"/>
<rect x="703.9" y="633.4" width="9.2" height="9.2" rx="3.2" transform="rotate(45 708.5 638)" fill="#000" stroke="#b8f03a" stroke-width="1.3"/>
<circle cx="355" cy="183.5" r="3.6" fill="#064" stroke="#e8b868" stroke-width="1.8"/><circle cx="355" cy="183.5" r="1.4" fill="#0a5a0a"/>
<circle cx="354.6" cy="625.6" r="3.6" fill="#064" stroke="#e8b868" stroke-width="1.8"/><circle cx="354.6" cy="625.6" r="1.4" fill="#0a5a0a"/>
<circle cx="708.5" cy="183.5" r="3.6" fill="#000" stroke="#90d8b8" stroke-width="1.8"/><circle cx="708.5" cy="183.5" r="1.6" fill="#a000a0"/>
<circle cx="708.5" cy="625.6" r="3.6" fill="#000" stroke="#90d8b8" stroke-width="1.8"/><circle cx="708.5" cy="625.6" r="1.6" fill="#a000a0"/>
<path d="M357.8 650 L366.8 641 L375.8 650 L366.8 659 Z M357.8 650 H375.8 M366.8 641 V664" fill="none" stroke="#9a9a9a" stroke-width="0.9"/>
<rect x="1061" y="80.7" width="237.2" height="716.5" fill="#f0f0f0" />
<rect x="1061" y="80.7" width="1" height="716.5" fill="#ffffff" />
<rect x="1061" y="80.7" width="5" height="102.3" fill="#ffffff" />
<rect x="1061" y="80.7" width="237.2" height="4.3" fill="#ffffff" />
<rect x="1294" y="80.7" width="2.5" height="104.3" fill="#ffffff" />
<rect x="1296.3" y="80.7" width="1.3" height="716.5" fill="#fafafa" />
<rect x="1297.6" y="28" width="1.4" height="769.2" fill="#8c8c8c" />
<rect x="1066" y="84.6" width="228" height="97.4" fill="#a0a0a0" />
<rect x="1067" y="85.6" width="226.5" height="95.6" fill="#000" />
<rect x="1066" y="181.2" width="228" height="1.2" fill="#ffffff" />
<rect x="1067.2" y="85.6" width="21.2" height="13.3" fill="#008a00" />
<path d="M1067.8 99.4 H1087.8 V110.0 H1067.8 Z M1067.8 110.0 L1087.8 99.4" fill="none" stroke="#2a8a70" stroke-width="1.1"/>
<path d="M1067.8 111.0 H1087.8 V121.7 H1067.8 Z M1067.8 121.7 L1087.8 111.0" fill="none" stroke="#a09000" stroke-width="1.1"/>
<path d="M1067.8 122.7 H1087.8 V133.7 H1067.8 Z M1067.8 133.7 L1087.8 122.7" fill="none" stroke="#9a30d0" stroke-width="1.1"/>
<path d="M1067.8 134.7 H1087.8 V146.0 H1067.8 Z M1067.8 146.0 L1087.8 134.7" fill="none" stroke="#d07010" stroke-width="1.1"/>
<path d="M1067.8 147.0 H1087.8 V157.7 H1067.8 Z M1067.8 157.7 L1087.8 147.0" fill="none" stroke="#4a4ae0" stroke-width="1.1"/>
<path d="M1067.8 158.7 H1087.8 V169.5 H1067.8 Z M1067.8 169.5 L1087.8 158.7" fill="none" stroke="#505050" stroke-width="1.1"/>
<path d="M1067.8 170.5 H1087.8 V180.7 H1067.8 Z M1067.8 180.7 L1087.8 170.5" fill="none" stroke="#b030b0" stroke-width="1.1"/>
<rect x="1102.6" y="86.2" width="155.4" height="94.6" fill="none" stroke="#c4b800" stroke-width="1.3"/>
<text x="1244.5" y="96" font-family="Liberation Mono" font-size="10.2" fill="#c850e8" text-anchor="start" textLength="47" lengthAdjust="spacingAndGlyphs">DRC OFF</text>
<text x="1244.5" y="105.5" font-family="Liberation Mono" font-size="10.2" fill="#c850e8" text-anchor="start" textLength="47" lengthAdjust="spacingAndGlyphs">COM OFF</text>
<rect x="1161" y="96.5" width="9" height="10" rx="1.2" fill="none" stroke="#4ad824" stroke-width="1.1"/>
<rect x="1173" y="96.5" width="13" height="6.5" rx="1.2" fill="none" stroke="#4ad824" stroke-width="1.1"/>
<rect x="1176" y="102.5" width="5" height="5" rx="1.2" fill="none" stroke="#4ad824" stroke-width="1.1"/>
<rect x="1163" y="109" width="6" height="5.5" rx="1.2" fill="none" stroke="#4ad824" stroke-width="1.1"/>
<rect x="1180.5" y="106" width="4.5" height="4.5" rx="1.2" fill="none" stroke="#4ad824" stroke-width="1.1"/>
<rect x="1190.5" y="106" width="6" height="6" rx="1.2" fill="none" stroke="#4ad824" stroke-width="1.1"/>
<rect x="1152.3" y="122" width="8.5" height="23" rx="1.2" fill="none" stroke="#4ad824" stroke-width="1.1"/>
<rect x="1152.3" y="145" width="8.5" height="13" rx="1.2" fill="none" stroke="#4ad824" stroke-width="1.1"/>
<rect x="1169" y="130" width="16" height="16.5" rx="1.2" fill="none" stroke="#4ad824" stroke-width="1.1"/>
<rect x="1186" y="129" width="10" height="20" rx="1.2" fill="none" stroke="#4ad824" stroke-width="1.1"/>
<rect x="1161" y="149" width="9.5" height="6" rx="1.2" fill="none" stroke="#4ad824" stroke-width="1.1"/>
<rect x="1161" y="155" width="9.5" height="6" rx="1.2" fill="none" stroke="#4ad824" stroke-width="1.1"/>
<rect x="1179" y="151" width="12.5" height="4.5" rx="1.2" fill="none" stroke="#4ad824" stroke-width="1.1"/>
<rect x="1199.2" y="146" width="6.2" height="21" rx="1.2" fill="none" stroke="#4ad824" stroke-width="1.1"/>
<path d="M1187 132 H1195 M1187 135 H1195 M1187 138 H1195 M1187 141 H1195 M1187 144 H1195 M1182.5 151 V155.5" stroke="#4ad824" stroke-width="0.9"/>
<rect x="1066.5" y="188.3" width="27.3" height="25.9" fill="#f0f0f0" />
<rect x="1066.5" y="188.3" width="27.3" height="1" fill="#fcfcfc" />
<rect x="1066.5" y="188.3" width="1" height="25.9" fill="#fcfcfc" />
<rect x="1066.5" y="212.6" width="27.3" height="1.6" fill="#8a8a8a" />
<rect x="1092.2" y="188.3" width="1.6" height="25.9" fill="#8a8a8a" />
<text x="1079.35" y="202.9" font-family="Liberation Sans" font-size="10.6" fill="#222" text-anchor="middle" stroke="#222" stroke-width="0.35">1</text>
<rect x="1095.4" y="188.3" width="27.9" height="25.9" fill="#f0f0f0" />
<rect x="1095.4" y="188.3" width="27.9" height="1" fill="#fcfcfc" />
<rect x="1095.4" y="188.3" width="1" height="25.9" fill="#fcfcfc" />
<rect x="1095.4" y="212.6" width="27.9" height="1.6" fill="#8a8a8a" />
<rect x="1121.7" y="188.3" width="1.6" height="25.9" fill="#8a8a8a" />
<text x="1108.55" y="202.9" font-family="Liberation Sans" font-size="10.6" fill="#222" text-anchor="middle" stroke="#222" stroke-width="0.35">2</text>
<rect x="1124.9" y="188.3" width="27.6" height="25.9" fill="#f0f0f0" />
<rect x="1124.9" y="188.3" width="27.6" height="1" fill="#fcfcfc" />
<rect x="1124.9" y="188.3" width="1" height="25.9" fill="#fcfcfc" />
<rect x="1124.9" y="212.6" width="27.6" height="1.6" fill="#8a8a8a" />
<rect x="1150.9" y="188.3" width="1.6" height="25.9" fill="#8a8a8a" />
<text x="1137.9" y="202.9" font-family="Liberation Sans" font-size="10.6" fill="#222" text-anchor="middle" stroke="#222" stroke-width="0.35">3</text>
<rect x="1154.6" y="188.3" width="27.9" height="25.9" fill="#f0f0f0" />
<rect x="1154.6" y="188.3" width="27.9" height="1" fill="#fcfcfc" />
<rect x="1154.6" y="188.3" width="1" height="25.9" fill="#fcfcfc" />
<rect x="1154.6" y="212.6" width="27.9" height="1.6" fill="#8a8a8a" />
<rect x="1180.9" y="188.3" width="1.6" height="25.9" fill="#8a8a8a" />
<text x="1167.75" y="202.9" font-family="Liberation Sans" font-size="10.6" fill="#222" text-anchor="middle" stroke="#222" stroke-width="0.35">P</text>
<rect x="1210.4" y="194.8" width="12" height="11.4" fill="#8a8a8a" />
<rect x="1212" y="196.4" width="10.4" height="9.8" fill="#ffffff" />
<rect x="1212" y="196.4" width="9.4" height="8.8" fill="#f6f6f6" />
<text x="1230.3" y="202.9" font-family="Liberation Sans" font-size="10.6" fill="#222" text-anchor="start" stroke="#222" stroke-width="0.3" textLength="33" lengthAdjust="spacingAndGlyphs">STORE</text>
<rect x="1066" y="216.4" width="228" height="1" fill="#a8a8a8" />
<rect x="1066" y="217.4" width="228" height="1" fill="#ffffff" />
<rect x="1066.5" y="219.3" width="25.6" height="24.8" fill="#fafafa" />
<rect x="1066.5" y="219.3" width="25.6" height="1" fill="#fcfcfc" />
<rect x="1066.5" y="219.3" width="1" height="24.8" fill="#fcfcfc" />
<rect x="1066.5" y="242.5" width="25.6" height="1.6" fill="#8a8a8a" />
<rect x="1090.5" y="219.3" width="1.6" height="24.8" fill="#8a8a8a" />
<rect x="1093.5" y="219.3" width="26.1" height="24.8" fill="#f0f0f0" />
<rect x="1093.5" y="219.3" width="26.1" height="1" fill="#fcfcfc" />
<rect x="1093.5" y="219.3" width="1" height="24.8" fill="#fcfcfc" />
<rect x="1093.5" y="242.5" width="26.1" height="1.6" fill="#8a8a8a" />
<rect x="1118" y="219.3" width="1.6" height="24.8" fill="#8a8a8a" />
<rect x="1121" y="219.3" width="26.7" height="24.8" fill="#f0f0f0" />
<rect x="1121" y="219.3" width="26.7" height="1" fill="#fcfcfc" />
<rect x="1121" y="219.3" width="1" height="24.8" fill="#fcfcfc" />
<rect x="1121" y="242.5" width="26.7" height="1.6" fill="#8a8a8a" />
<rect x="1146.1" y="219.3" width="1.6" height="24.8" fill="#8a8a8a" />
<rect x="1148.6" y="219.3" width="26.5" height="24.8" fill="#f0f0f0" />
<rect x="1148.6" y="219.3" width="26.5" height="1" fill="#fcfcfc" />
<rect x="1148.6" y="219.3" width="1" height="24.8" fill="#fcfcfc" />
<rect x="1148.6" y="242.5" width="26.5" height="1.6" fill="#8a8a8a" />
<rect x="1173.5" y="219.3" width="1.6" height="24.8" fill="#8a8a8a" />
<rect x="1176" y="219.3" width="27.2" height="24.8" fill="#f0f0f0" />
<rect x="1176" y="219.3" width="27.2" height="1" fill="#fcfcfc" />
<rect x="1176" y="219.3" width="1" height="24.8" fill="#fcfcfc" />
<rect x="1176" y="242.5" width="27.2" height="1.6" fill="#8a8a8a" />
<rect x="1201.6" y="219.3" width="1.6" height="24.8" fill="#8a8a8a" />
<rect x="1066.5" y="246" width="25.6" height="26.2" fill="#f0f0f0" />
<rect x="1066.5" y="246" width="25.6" height="1" fill="#fcfcfc" />
<rect x="1066.5" y="246" width="1" height="26.2" fill="#fcfcfc" />
<rect x="1066.5" y="270.6" width="25.6" height="1.6" fill="#8a8a8a" />
<rect x="1090.5" y="246" width="1.6" height="26.2" fill="#8a8a8a" />
<rect x="1093.5" y="246" width="26.1" height="26.2" fill="#f0f0f0" />
<rect x="1093.5" y="246" width="26.1" height="1" fill="#fcfcfc" />
<rect x="1093.5" y="246" width="1" height="26.2" fill="#fcfcfc" />
<rect x="1093.5" y="270.6" width="26.1" height="1.6" fill="#8a8a8a" />
<rect x="1118" y="246" width="1.6" height="26.2" fill="#8a8a8a" />
<rect x="1121" y="246" width="26.7" height="26.2" fill="#f0f0f0" />
<rect x="1121" y="246" width="26.7" height="1" fill="#fcfcfc" />
<rect x="1121" y="246" width="1" height="26.2" fill="#fcfcfc" />
<rect x="1121" y="270.6" width="26.7" height="1.6" fill="#8a8a8a" />
<rect x="1146.1" y="246" width="1.6" height="26.2" fill="#8a8a8a" />
<rect x="1148.6" y="246" width="26.5" height="26.2" fill="#f0f0f0" />
<rect x="1148.6" y="246" width="26.5" height="1" fill="#fcfcfc" />
<rect x="1148.6" y="246" width="1" height="26.2" fill="#fcfcfc" />
<rect x="1148.6" y="270.6" width="26.5" height="1.6" fill="#8a8a8a" />
<rect x="1173.5" y="246" width="1.6" height="26.2" fill="#8a8a8a" />
<rect x="1176" y="246" width="27.2" height="26.2" fill="#f0f0f0" />
<rect x="1176" y="246" width="27.2" height="1" fill="#fcfcfc" />
<rect x="1176" y="246" width="1" height="26.2" fill="#fcfcfc" />
<rect x="1176" y="270.6" width="27.2" height="1.6" fill="#8a8a8a" />
<rect x="1201.6" y="246" width="1.6" height="26.2" fill="#8a8a8a" />
<rect x="1203.5" y="246" width="27.2" height="26.2" fill="#f0f0f0" />
<rect x="1203.5" y="246" width="27.2" height="1" fill="#fcfcfc" />
<rect x="1203.5" y="246" width="1" height="26.2" fill="#fcfcfc" />
<rect x="1203.5" y="270.6" width="27.2" height="1.6" fill="#8a8a8a" />
<rect x="1229.1" y="246" width="1.6" height="26.2" fill="#8a8a8a" />
<path d="M1084 231 L1086.5 231 M1082.39 227.11 L1084.16 225.34 M1074.61 227.11 L1072.84 225.34 M1073 231 L1070.5 231 M1074.61 234.89 L1072.84 236.66 M1078.5 236.5 L1078.5 239 M1082.39 234.89 L1084.16 236.66 " stroke="#444" stroke-width="0.9"/>
<circle cx="1078.5" cy="231" r="3.8" fill="#f0e000" stroke="#222" stroke-width="1"/>
<rect x="1076.7" y="234.2" width="3.6" height="4" fill="#777" stroke="#333" stroke-width="0.6"/>
<rect x="1097.3" y="223" width="18.5" height="18.8" fill="#f8f8f8" stroke="#111" stroke-width="1.2"/><path d="M1098 242.3 H1116.5 V223.5" stroke="#000" stroke-width="1.6" fill="none"/>
<path d="M1112 231 L1114.5 231 M1110.39 227.11 L1112.16 225.34 M1102.61 227.11 L1100.84 225.34 M1101 231 L1098.5 231 M1102.61 234.89 L1100.84 236.66 M1106.5 236.5 L1106.5 239 M1110.39 234.89 L1112.16 236.66 " stroke="#444" stroke-width="0.9"/>
<circle cx="1106.5" cy="231" r="3.8" fill="#f0e000" stroke="#222" stroke-width="1"/>
<rect x="1104.7" y="234.2" width="3.6" height="4" fill="#777" stroke="#333" stroke-width="0.6"/>
<path d="M1127 225 L1142.5 240.5 M1142.5 225 L1127 240.5" stroke="#111" stroke-width="1.1"/>
<path d="M1126.5 224.5 l3.5 0 l-3.5 3.5 z" fill="#000"/>
<path d="M1143 224.5 l-3.5 0 l3.5 3.5 z" fill="#000"/>
<path d="M1126.5 241 l3.5 0 l-3.5 -3.5 z" fill="#000"/>
<path d="M1143 241 l-3.5 0 l3.5 -3.5 z" fill="#000"/>
<rect x="1132.3" y="230.5" width="4.2" height="4.2" transform="rotate(45 1134.4 232.6)" fill="#1010e0"/>
<path d="M1155 228 V241.5 H1165" fill="none" stroke="#555" stroke-width="0.8" stroke-dasharray="1 1"/><rect x="1160.3" y="224.3" width="11.3" height="15" rx="1" fill="#f4f4f4" stroke="#222" stroke-width="1.2"/><path d="M1162 236 L1169.5 229" stroke="#f00" stroke-width="1.8"/><path d="M1168 227 L1171 226.5 L1170.5 230 Z" fill="#f00"/>
<path d="M1190.3 226.3 L1198.3 239.6 H1182.3 Z" fill="#0000f0" stroke="#000040" stroke-width="0.5"/>
<path d="M1070 254 V268 H1082" fill="none" stroke="#333" stroke-width="0.9" stroke-dasharray="1 1.5"/>
<path d="M1080.5 260.3 L1075 265.8" stroke="#000" stroke-width="2.6" stroke-linecap="round"/>
<circle cx="1083" cy="257.3" r="5" fill="#30f0f0" stroke="#000" stroke-width="1.6"/>
<path d="M1106.3 261 L1100.8 266.5" stroke="#000" stroke-width="2.6" stroke-linecap="round"/>
<circle cx="1108.8" cy="258" r="5" fill="#30f0f0" stroke="#000" stroke-width="1.6"/>
<path d="M1106.3 258 H1111.3 M1108.8 255.5 V260.5" stroke="#000" stroke-width="1.6"/>
<path d="M1133.2 261 L1127.7 266.5" stroke="#000" stroke-width="2.6" stroke-linecap="round"/>
<circle cx="1135.7" cy="258" r="5" fill="#30f0f0" stroke="#000" stroke-width="1.6"/>
<path d="M1133.1000000000001 258 H1138.3" stroke="#000" stroke-width="1.8"/>
<path d="M1155.8 258.5 L1169.3 251 V266.5 Z" fill="#0000f0" stroke="#000040" stroke-width="0.5"/>
<path d="M1181.8 251.8 H1198.8 L1190.3 265.3 Z" fill="#0000f0" stroke="#000040" stroke-width="0.5"/>
<path d="M1210.3 251 V266.5 L1224 258.7 Z" fill="#0000f0" stroke="#000040" stroke-width="0.5"/>
<rect x="1.2" y="721.6" width="1057.4" height="75.6" fill="#f0f0f0" />
<rect x="2" y="721.6" width="1052" height="3.4" fill="#ffffff" />
<rect x="2" y="725" width="1056.6" height="1.3" fill="#dcdcdc" />
<rect x="1.2" y="727" width="1" height="70.2" fill="#ffffff" />
<text x="6.6" y="741.9" font-family="Liberation Mono" font-size="11.5" fill="#222" text-anchor="start" stroke="#222" stroke-width="0.25" textLength="41" lengthAdjust="spacingAndGlyphs">Layer:</text>
<rect x="50.5" y="729" width="61.5" height="19" fill="#ececec" />
<rect x="50.5" y="729" width="61.5" height="1" fill="#a0a0a0" />
<rect x="50.5" y="729" width="1" height="19" fill="#a0a0a0" />
<rect x="51.5" y="730" width="59.5" height="1" fill="#696969" />
<rect x="51.5" y="730" width="1" height="17" fill="#696969" />
<rect x="50.5" y="747" width="61.5" height="1" fill="#ffffff" />
<rect x="111" y="729" width="1" height="19" fill="#ffffff" />
<rect x="51.5" y="746" width="59.5" height="1" fill="#e3e3e3" />
<rect x="110" y="730" width="1" height="17" fill="#e3e3e3" />
<rect x="95.5" y="731" width="14.5" height="15" fill="#f8f8f8" />
<rect x="95.5" y="731" width="14.5" height="15" fill="#f0f0f0" />
<rect x="95.5" y="744.6" width="14.5" height="1.4" fill="#7a7a7a" />
<rect x="108.6" y="731" width="1.4" height="15" fill="#7a7a7a" />
<path d="M98.25 736.7 H106.25 L102.25 740.9 Z" fill="#000"/>
<rect x="54" y="732.2" width="15" height="13.8" fill="#000" />
<rect x="55" y="733.2" width="13" height="11.8" fill="#008000" />
<text x="73" y="744.2" font-family="Liberation Sans" font-size="11.6" fill="#222" text-anchor="start" >1</text>
<path d="M128 733.5 V739 M131.2 733.5 V739 M134.4 733.5 V739 M127.2 739 H135.2 M128.8 739 V745.2 M133 739 V745.2" stroke="#8400a4" stroke-width="2.2" stroke-linecap="round" fill="none"/>
<text x="135.3" y="745.6" font-family="Liberation Sans" font-size="7" fill="#3a3a3a" text-anchor="start" font-weight="bold" textLength="8" lengthAdjust="spacingAndGlyphs">ire</text>
<rect x="144.8" y="729.6" width="117.1" height="17.3" fill="#ffffff" />
<rect x="144.8" y="729.6" width="117.1" height="1" fill="#a0a0a0" />
<rect x="144.8" y="729.6" width="1" height="17.3" fill="#a0a0a0" />
<rect x="145.8" y="730.6" width="115.1" height="1" fill="#696969" />
<rect x="145.8" y="730.6" width="1" height="15.3" fill="#696969" />
<rect x="144.8" y="745.9" width="117.1" height="1" fill="#ffffff" />
<rect x="260.9" y="729.6" width="1" height="17.3" fill="#ffffff" />
<rect x="145.8" y="744.9" width="115.1" height="1" fill="#e3e3e3" />
<rect x="259.9" y="730.6" width="1" height="15.3" fill="#e3e3e3" />
<rect x="147.5" y="731.5" width="90.5" height="12" fill="#0a78d8" />
<text x="148.5" y="741.8" font-family="Liberation Mono" font-size="11.5" fill="#ffffff" text-anchor="start" textLength="89" lengthAdjust="spacingAndGlyphs">(0.000,0.000)</text>
<rect x="245.5" y="731.3" width="14.8" height="14.3" fill="#f0f0f0" />
<rect x="245.5" y="744.2" width="14.8" height="1.4" fill="#7a7a7a" />
<rect x="258.9" y="731.3" width="1.4" height="14.3" fill="#7a7a7a" />
<path d="M248.4 736.65 H256.4 L252.4 740.85 Z" fill="#000"/>
<path d="M271.7 734.2 L274.8 744.6 L277.8 734.2" stroke="#8400a4" stroke-width="2.3" stroke-linecap="round" stroke-linejoin="round" fill="none"/>
<text x="279.3" y="745.6" font-family="Liberation Sans" font-size="7" fill="#3a3a3a" text-anchor="start" font-weight="bold" textLength="6.5" lengthAdjust="spacingAndGlyphs">ia</text>
<rect x="286.6" y="729.6" width="116.9" height="17.3" fill="#ffffff" />
<rect x="286.6" y="729.6" width="116.9" height="1" fill="#a0a0a0" />
<rect x="286.6" y="729.6" width="1" height="17.3" fill="#a0a0a0" />
<rect x="287.6" y="730.6" width="114.9" height="1" fill="#696969" />
<rect x="287.6" y="730.6" width="1" height="15.3" fill="#696969" />
<rect x="286.6" y="745.9" width="116.9" height="1" fill="#ffffff" />
<rect x="402.5" y="729.6" width="1" height="17.3" fill="#ffffff" />
<rect x="287.6" y="744.9" width="114.9" height="1" fill="#e3e3e3" />
<rect x="401.5" y="730.6" width="1" height="15.3" fill="#e3e3e3" />
<rect x="290" y="731.5" width="91" height="12" fill="#0a78d8" />
<text x="291" y="741.8" font-family="Liberation Mono" font-size="11.5" fill="#ffffff" text-anchor="start" textLength="89" lengthAdjust="spacingAndGlyphs">(0.000,0.000)</text>
<rect x="387.5" y="731.3" width="14.8" height="14.3" fill="#f0f0f0" />
<rect x="387.5" y="744.2" width="14.8" height="1.4" fill="#7a7a7a" />
<rect x="400.9" y="731.3" width="1.4" height="14.3" fill="#7a7a7a" />
<path d="M390.4 736.65 H398.4 L394.4 740.85 Z" fill="#000"/>
<rect x="7" y="760.5" width="12.5" height="8.7" fill="#777" />
<rect x="5.6" y="758.6" width="12" height="8.8" rx="1.2" fill="#1a1aff"/>
<path d="M12.6 761.3 H10.2 Q8.6 761.3 8.6 763 Q8.6 764.8 10.2 764.8 H11.5" fill="none" stroke="#fff" stroke-width="1.4"/><circle cx="14.3" cy="764.2" r="1.4" fill="#fff"/>
<rect x="22" y="755.5" width="610" height="16" fill="#ffffff" />
<rect x="22" y="755.5" width="610" height="1" fill="#a0a0a0" />
<rect x="22" y="755.5" width="1" height="16" fill="#a0a0a0" />
<rect x="23" y="756.5" width="608" height="1" fill="#696969" />
<rect x="23" y="756.5" width="1" height="14" fill="#696969" />
<rect x="22" y="770.5" width="610" height="1" fill="#ffffff" />
<rect x="631" y="755.5" width="1" height="16" fill="#ffffff" />
<rect x="23" y="769.5" width="608" height="1" fill="#e3e3e3" />
<rect x="630" y="756.5" width="1" height="14" fill="#e3e3e3" />
<path d="M6 779.8 H19.6 L12.8 791.6 Z" fill="#f0f000" stroke="#000" stroke-width="1.3" stroke-linejoin="round"/>
<ellipse cx="12.8" cy="783.2" rx="1.3" ry="1.9" fill="#000"/><circle cx="12.8" cy="787.2" r="0.9" fill="#000"/>
<rect x="22" y="776.5" width="610" height="15.9" fill="#ffffff" />
<rect x="22" y="776.5" width="610" height="1" fill="#a0a0a0" />
<rect x="22" y="776.5" width="1" height="15.9" fill="#a0a0a0" />
<rect x="23" y="777.5" width="608" height="1" fill="#696969" />
<rect x="23" y="777.5" width="1" height="13.9" fill="#696969" />
<rect x="22" y="791.4" width="610" height="1" fill="#ffffff" />
<rect x="631" y="776.5" width="1" height="15.9" fill="#ffffff" />
<rect x="23" y="790.4" width="608" height="1" fill="#e3e3e3" />
<rect x="630" y="777.5" width="1" height="13.9" fill="#e3e3e3" />
<rect x="635.7" y="754.8" width="19.1" height="18.2" fill="#f0f0f0" />
<rect x="635.7" y="754.8" width="18.1" height="1" fill="#ffffff" />
<rect x="635.7" y="754.8" width="1" height="17.2" fill="#ffffff" />
<rect x="635.7" y="772" width="19.1" height="1" fill="#696969" />
<rect x="653.8" y="754.8" width="1" height="18.2" fill="#696969" />
<rect x="636.7" y="771" width="17.1" height="1" fill="#a0a0a0" />
<rect x="652.8" y="755.8" width="1" height="16.2" fill="#a0a0a0" />
<path d="M639.55 763.4 L644.55 758.9 L649.55 763.4 M639.55 768.4 L644.55 763.9 L649.55 768.4" fill="none" stroke="#0000e8" stroke-width="1.9"/>
<rect x="656" y="754.8" width="19.5" height="18.2" fill="#f0f0f0" />
<rect x="656" y="754.8" width="18.5" height="1" fill="#ffffff" />
<rect x="656" y="754.8" width="1" height="17.2" fill="#ffffff" />
<rect x="656" y="772" width="19.5" height="1" fill="#696969" />
<rect x="674.5" y="754.8" width="1" height="18.2" fill="#696969" />
<rect x="657" y="771" width="17.5" height="1" fill="#a0a0a0" />
<rect x="673.5" y="755.8" width="1" height="16.2" fill="#a0a0a0" />
<path d="M660.05 759.4 L665.05 763.9 L670.05 759.4 M660.05 764.4 L665.05 768.9 L670.05 764.4" fill="none" stroke="#0000e8" stroke-width="1.9"/>
<rect x="635.7" y="775.5" width="19.1" height="17.5" fill="#f0f0f0" />
<rect x="635.7" y="775.5" width="18.1" height="1" fill="#ffffff" />
<rect x="635.7" y="775.5" width="1" height="16.5" fill="#ffffff" />
<rect x="635.7" y="792" width="19.1" height="1" fill="#696969" />
<rect x="653.8" y="775.5" width="1" height="17.5" fill="#696969" />
<rect x="636.7" y="791" width="17.1" height="1" fill="#a0a0a0" />
<rect x="652.8" y="776.5" width="1" height="15.5" fill="#a0a0a0" />
<path d="M639.55 783.75 L644.55 779.25 L649.55 783.75 M639.55 788.75 L644.55 784.25 L649.55 788.75" fill="none" stroke="#0000e8" stroke-width="1.9"/>
<rect x="656" y="775.5" width="19.5" height="17.5" fill="#f0f0f0" />
<rect x="656" y="775.5" width="18.5" height="1" fill="#ffffff" />
<rect x="656" y="775.5" width="1" height="16.5" fill="#ffffff" />
<rect x="656" y="792" width="19.5" height="1" fill="#696969" />
<rect x="674.5" y="775.5" width="1" height="17.5" fill="#696969" />
<rect x="657" y="791" width="17.5" height="1" fill="#a0a0a0" />
<rect x="673.5" y="776.5" width="1" height="15.5" fill="#a0a0a0" />
<path d="M660.05 779.75 L665.05 784.25 L670.05 779.75 M660.05 784.75 L665.05 789.25 L670.05 784.75" fill="none" stroke="#0000e8" stroke-width="1.9"/>
<rect x="691.5" y="726.3" width="358" height="25.3" fill="none" stroke="#a0a0a0" stroke-width="1"/>
<rect x="692.5" y="727.3" width="358" height="25.3" fill="none" stroke="#ffffff" stroke-width="1"/>
<rect x="695.4" y="730.5" width="75.4" height="16.1" fill="#f0f0f0" />
<rect x="695.4" y="730.5" width="75.4" height="1" fill="#a0a0a0" />
<rect x="695.4" y="730.5" width="1" height="16.1" fill="#a0a0a0" />
<rect x="696.4" y="731.5" width="73.4" height="1" fill="#696969" />
<rect x="696.4" y="731.5" width="1" height="14.1" fill="#696969" />
<rect x="695.4" y="745.6" width="75.4" height="1" fill="#ffffff" />
<rect x="769.8" y="730.5" width="1" height="16.1" fill="#ffffff" />
<rect x="696.4" y="744.6" width="73.4" height="1" fill="#e3e3e3" />
<rect x="768.8" y="731.5" width="1" height="14.1" fill="#e3e3e3" />
<text x="699" y="742.6" font-family="Liberation Mono" font-size="11.5" fill="#222" text-anchor="start" stroke="#222" stroke-width="0.25" textLength="54" lengthAdjust="spacingAndGlyphs">Absolute</text>
<rect x="755" y="732.5" width="14.5" height="13" fill="#f0f0f0" />
<rect x="755" y="744.1" width="14.5" height="1.4" fill="#7a7a7a" />
<rect x="768.1" y="732.5" width="1.4" height="13" fill="#7a7a7a" />
<path d="M757.75 737.2 H765.75 L761.75 741.4 Z" fill="#000"/>
<text x="775" y="742.6" font-family="Liberation Mono" font-size="11.5" fill="#222" text-anchor="start" stroke="#222" stroke-width="0.25" textLength="12" lengthAdjust="spacingAndGlyphs">X:</text>
<rect x="792" y="731" width="18.5" height="17" fill="#f0f0f0" />
<rect x="792" y="731" width="17.5" height="1" fill="#ffffff" />
<rect x="792" y="731" width="1" height="16" fill="#ffffff" />
<rect x="792" y="747" width="18.5" height="1" fill="#696969" />
<rect x="809.5" y="731" width="1" height="17" fill="#696969" />
<rect x="793" y="746" width="16.5" height="1" fill="#a0a0a0" />
<rect x="808.5" y="732" width="1" height="15" fill="#a0a0a0" />
<rect x="798.5" y="734.5" width="7" height="10" fill="#555"/>
<path d="M798.5 737 h7 M798.5 739.2 h7 M798.5 741.4 h7 M798.5 743.6 h7 M800.5 736.5 v8 M802.7 736.5 v8 M804.9 736.5 v8 " stroke="#d0d0d0" stroke-width="0.8"/>
<path d="M796 745 H806" stroke="#222" stroke-width="1.2"/>
<rect x="813" y="731" width="70.8" height="16" fill="#ffffff" />
<rect x="813" y="731" width="70.8" height="1" fill="#a0a0a0" />
<rect x="813" y="731" width="1" height="16" fill="#a0a0a0" />
<rect x="814" y="732" width="68.8" height="1" fill="#696969" />
<rect x="814" y="732" width="1" height="14" fill="#696969" />
<rect x="813" y="746" width="70.8" height="1" fill="#ffffff" />
<rect x="882.8" y="731" width="1" height="16" fill="#ffffff" />
<rect x="814" y="745" width="68.8" height="1" fill="#e3e3e3" />
<rect x="881.8" y="732" width="1" height="14" fill="#e3e3e3" />
<text x="816" y="742.6" font-family="Liberation Mono" font-size="11.5" fill="#222" text-anchor="start" stroke="#222" stroke-width="0.25" textLength="20" lengthAdjust="spacingAndGlyphs">0.0</text>
<text x="889" y="742.6" font-family="Liberation Mono" font-size="11.5" fill="#222" text-anchor="start" stroke="#222" stroke-width="0.25" textLength="12" lengthAdjust="spacingAndGlyphs">Y:</text>
<rect x="904" y="731" width="18.5" height="17" fill="#f0f0f0" />
<rect x="904" y="731" width="17.5" height="1" fill="#ffffff" />
<rect x="904" y="731" width="1" height="16" fill="#ffffff" />
<rect x="904" y="747" width="18.5" height="1" fill="#696969" />
<rect x="921.5" y="731" width="1" height="17" fill="#696969" />
<rect x="905" y="746" width="16.5" height="1" fill="#a0a0a0" />
<rect x="920.5" y="732" width="1" height="15" fill="#a0a0a0" />
<rect x="910.5" y="734.5" width="7" height="10" fill="#555"/>
<path d="M910.5 737 h7 M910.5 739.2 h7 M910.5 741.4 h7 M910.5 743.6 h7 M912.5 736.5 v8 M914.7 736.5 v8 M916.9 736.5 v8 " stroke="#d0d0d0" stroke-width="0.8"/>
<path d="M908 745 H918" stroke="#222" stroke-width="1.2"/>
<rect x="926" y="731" width="71" height="16" fill="#ffffff" />
<rect x="926" y="731" width="71" height="1" fill="#a0a0a0" />
<rect x="926" y="731" width="1" height="16" fill="#a0a0a0" />
<rect x="927" y="732" width="69" height="1" fill="#696969" />
<rect x="927" y="732" width="1" height="14" fill="#696969" />
<rect x="926" y="746" width="71" height="1" fill="#ffffff" />
<rect x="996" y="731" width="1" height="16" fill="#ffffff" />
<rect x="927" y="745" width="69" height="1" fill="#e3e3e3" />
<rect x="995" y="732" width="1" height="14" fill="#e3e3e3" />
<text x="929" y="742.6" font-family="Liberation Mono" font-size="11.5" fill="#222" text-anchor="start" stroke="#222" stroke-width="0.25" textLength="20" lengthAdjust="spacingAndGlyphs">0.0</text>
<rect x="1001" y="730" width="46.2" height="17.6" fill="#f0f0f0" />
<rect x="1001" y="730" width="45.2" height="1" fill="#ffffff" />
<rect x="1001" y="730" width="1" height="16.6" fill="#ffffff" />
<rect x="1001" y="746.6" width="46.2" height="1" fill="#696969" />
<rect x="1046.2" y="730" width="1" height="17.6" fill="#696969" />
<rect x="1002" y="745.6" width="44.2" height="1" fill="#a0a0a0" />
<rect x="1045.2" y="731" width="1" height="15.6" fill="#a0a0a0" />
<text x="1006" y="741.8" font-family="Liberation Mono" font-size="11.5" fill="#222" text-anchor="start" stroke="#222" stroke-width="0.25" textLength="35" lengthAdjust="spacingAndGlyphs">Apply</text>
<rect x="689" y="755.8" width="61.8" height="17" fill="#f0f0f0" />
<rect x="689" y="755.8" width="61.8" height="1" fill="#a0a0a0" />
<rect x="689" y="755.8" width="1" height="17" fill="#a0a0a0" />
<rect x="690" y="756.8" width="59.8" height="1" fill="#696969" />
<rect x="690" y="756.8" width="1" height="15" fill="#696969" />
<rect x="689" y="771.8" width="61.8" height="1" fill="#ffffff" />
<rect x="749.8" y="755.8" width="1" height="17" fill="#ffffff" />
<rect x="690" y="770.8" width="59.8" height="1" fill="#e3e3e3" />
<rect x="748.8" y="756.8" width="1" height="15" fill="#e3e3e3" />
<text x="692" y="767.1" font-family="Liberation Mono" font-size="11.5" fill="#222" text-anchor="start" stroke="#222" stroke-width="0.25" textLength="20" lengthAdjust="spacingAndGlyphs">All</text>
<rect x="734.3" y="757.5" width="15.2" height="14" fill="#f0f0f0" />
<rect x="734.3" y="770.1" width="15.2" height="1.4" fill="#7a7a7a" />
<rect x="748.1" y="757.5" width="1.4" height="14" fill="#7a7a7a" />
<path d="M737.4 762.7 H745.4 L741.4 766.9 Z" fill="#000"/>
<rect x="759.5" y="755.8" width="48" height="17" fill="#f0f0f0" />
<rect x="759.5" y="755.8" width="48" height="1" fill="#a0a0a0" />
<rect x="759.5" y="755.8" width="1" height="17" fill="#a0a0a0" />
<rect x="760.5" y="756.8" width="46" height="1" fill="#696969" />
<rect x="760.5" y="756.8" width="1" height="15" fill="#696969" />
<rect x="759.5" y="771.8" width="48" height="1" fill="#ffffff" />
<rect x="806.5" y="755.8" width="1" height="17" fill="#ffffff" />
<rect x="760.5" y="770.8" width="46" height="1" fill="#e3e3e3" />
<rect x="805.5" y="756.8" width="1" height="15" fill="#e3e3e3" />
<text x="762.5" y="767.1" font-family="Liberation Mono" font-size="11.5" fill="#222" text-anchor="start" stroke="#222" stroke-width="0.25">A</text>
<rect x="791.5" y="757.5" width="14.8" height="14" fill="#f0f0f0" />
<rect x="791.5" y="770.1" width="14.8" height="1.4" fill="#7a7a7a" />
<rect x="804.9" y="757.5" width="1.4" height="14" fill="#7a7a7a" />
<path d="M794.4 762.7 H802.4 L798.4 766.9 Z" fill="#000"/>
<rect x="849.5" y="757" width="11" height="11" fill="#8a8a8a" />
<rect x="851.1" y="758.6" width="9.4" height="9.4" fill="#ffffff" />
<rect x="851.1" y="758.6" width="8.4" height="8.4" fill="#f6f6f6" />
<text x="869" y="766" font-family="Liberation Mono" font-size="11.5" fill="#222" text-anchor="start" stroke="#222" stroke-width="0.25" textLength="82" lengthAdjust="spacingAndGlyphs">Display Grid</text>
<rect x="962" y="757" width="11" height="11" fill="#8a8a8a" />
<rect x="963.6" y="758.6" width="9.4" height="9.4" fill="#ffffff" />
<rect x="963.6" y="758.6" width="8.4" height="8.4" fill="#f6f6f6" />
<path d="M964.5 762 L966.8 765 L971 759.5" fill="none" stroke="#000" stroke-width="1.7"/>
<text x="982" y="766" font-family="Liberation Mono" font-size="11.5" fill="#222" text-anchor="start" stroke="#222" stroke-width="0.25" textLength="62" lengthAdjust="spacingAndGlyphs">Snap Grid</text>
<rect x="689" y="776" width="18" height="17.5" fill="#f0f0f0" />
<rect x="689" y="776" width="17" height="1" fill="#ffffff" />
<rect x="689" y="776" width="1" height="16.5" fill="#ffffff" />
<rect x="689" y="792.5" width="18" height="1" fill="#696969" />
<rect x="706" y="776" width="1" height="17.5" fill="#696969" />
<rect x="690" y="791.5" width="16" height="1" fill="#a0a0a0" />
<rect x="705" y="777" width="1" height="15.5" fill="#a0a0a0" />
<path d="M692.5 779.5 H699 L703 783.5 V790 H692.5 Z" fill="#f0f070" stroke="#000" stroke-width="1.2"/>
<path d="M694.5 782 L697.2 788.5 L700 782" fill="none" stroke="#c00000" stroke-width="1.8"/>
<rect x="710" y="776" width="130" height="16.5" fill="#f0f0f0" />
<rect x="710" y="776" width="130" height="1" fill="#a0a0a0" />
<rect x="710" y="776" width="1" height="16.5" fill="#a0a0a0" />
<rect x="711" y="777" width="128" height="1" fill="#696969" />
<rect x="711" y="777" width="1" height="14.5" fill="#696969" />
<rect x="710" y="791.5" width="130" height="1" fill="#ffffff" />
<rect x="839" y="776" width="1" height="16.5" fill="#ffffff" />
<rect x="711" y="790.5" width="128" height="1" fill="#e3e3e3" />
<rect x="838" y="777" width="1" height="14.5" fill="#e3e3e3" />
<rect x="822.5" y="778" width="16.2" height="13" fill="#f0f0f0" />
<rect x="822.5" y="789.6" width="16.2" height="1.4" fill="#7a7a7a" />
<rect x="837.3" y="778" width="1.4" height="13" fill="#7a7a7a" />
<path d="M826.1 782.7 H834.1 L830.1 786.9 Z" fill="#000"/>
<rect x="850" y="775.5" width="18.3" height="17.5" fill="#f0f0f0" />
<rect x="850" y="775.5" width="17.3" height="1" fill="#ffffff" />
<rect x="850" y="775.5" width="1" height="16.5" fill="#ffffff" />
<rect x="850" y="792" width="18.3" height="1" fill="#696969" />
<rect x="867.3" y="775.5" width="1" height="17.5" fill="#696969" />
<rect x="851" y="791" width="16.3" height="1" fill="#a0a0a0" />
<rect x="866.3" y="776.5" width="1" height="15.5" fill="#a0a0a0" />
<path d="M853.5 779 H860 L864 783 V789.5 H853.5 Z" fill="#f0f070" stroke="#000" stroke-width="1.2"/>
<path d="M856 783.5 h5 M856 786 h5" stroke="#888" stroke-width="0.8"/>
<rect x="872" y="777" width="11" height="11" fill="#8a8a8a" />
<rect x="873.6" y="778.6" width="9.4" height="9.4" fill="#ffffff" />
<rect x="873.6" y="778.6" width="8.4" height="8.4" fill="#f6f6f6" />
<text x="890" y="785.6" font-family="Liberation Mono" font-size="11.5" fill="#222" text-anchor="start" stroke="#222" stroke-width="0.25" textLength="20" lengthAdjust="spacingAndGlyphs">Net</text>
<rect x="922.5" y="775.5" width="18.5" height="17.5" fill="#f0f0f0" />
<rect x="922.5" y="775.5" width="17.5" height="1" fill="#ffffff" />
<rect x="922.5" y="775.5" width="1" height="16.5" fill="#ffffff" />
<rect x="922.5" y="792" width="18.5" height="1" fill="#696969" />
<rect x="940" y="775.5" width="1" height="17.5" fill="#696969" />
<rect x="923.5" y="791" width="16.5" height="1" fill="#a0a0a0" />
<rect x="939" y="776.5" width="1" height="15.5" fill="#a0a0a0" />
<path d="M926 779 H932.5 L936.5 783 V789.5 H926 Z" fill="#f0f070" stroke="#000" stroke-width="1.2"/>
<path d="M928.5 783.5 h5 M928.5 786 h5" stroke="#888" stroke-width="0.8"/>
<rect x="943" y="777" width="11" height="11" fill="#8a8a8a" />
<rect x="944.6" y="778.6" width="9.4" height="9.4" fill="#ffffff" />
<rect x="944.6" y="778.6" width="8.4" height="8.4" fill="#f6f6f6" />
<text x="962" y="785.6" font-family="Liberation Mono" font-size="11.5" fill="#222" text-anchor="start" stroke="#222" stroke-width="0.25" textLength="62" lengthAdjust="spacingAndGlyphs">Group Net</text>
<rect x="1.2" y="796.2" width="1297" height="1.2" fill="#fafafa" />
</svg>
</body></html>
